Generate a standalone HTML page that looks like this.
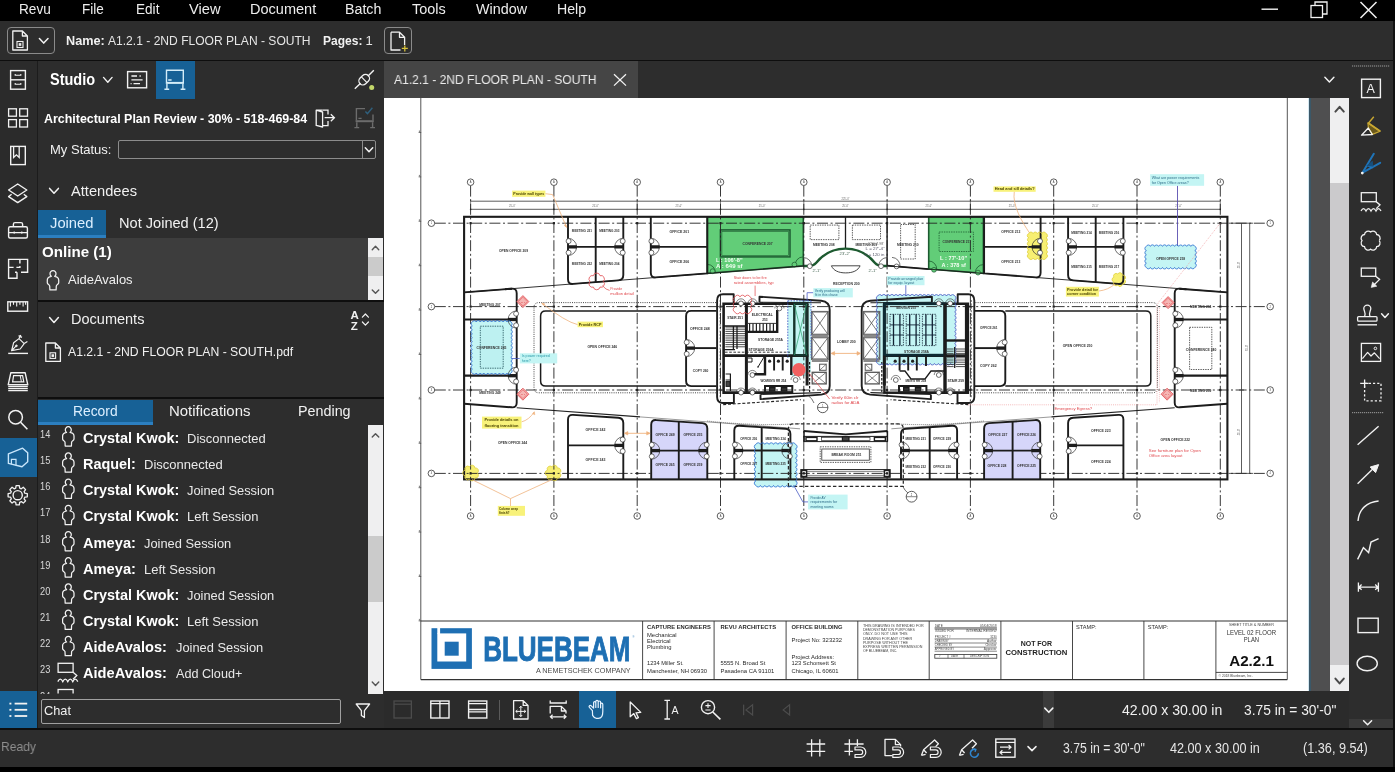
<!DOCTYPE html>
<html lang="en"><head><meta charset="utf-8"><title>Bluebeam Revu - A1.2.1 - 2ND FLOOR PLAN - SOUTH</title>
<style>
html,body{margin:0;padding:0;background:#000;}
body{width:1395px;height:772px;position:relative;overflow:hidden;font-family:"Liberation Sans",sans-serif;color:#f1f1f1;}
#app{position:absolute;left:0;top:0;width:1395px;height:772px;will-change:transform;}
.b{position:absolute;}
.t{position:absolute;white-space:pre;line-height:1;transform-origin:0 0;}
svg{position:absolute;left:0;top:0;overflow:hidden;}
svg text{font-family:"Liberation Sans",sans-serif;}
</style></head>
<body>
<div id="app">
<div class="b menubar" style="left:0px;top:0px;width:1395px;height:21px;background:#000;"></div>
<span class="t" id="t1" style="left:18.6px;top:2.00px;font-size:14px;color:#ededed;transform:scaleX(0.9759);">Revu</span>
<span class="t" id="t2" style="left:81.7px;top:2.00px;font-size:14px;color:#ededed;transform:scaleX(0.9662);">File</span>
<span class="t" id="t3" style="left:135.5px;top:2.00px;font-size:14px;color:#ededed;transform:scaleX(0.9699);">Edit</span>
<span class="t" id="t4" style="left:189.2px;top:2.00px;font-size:14px;color:#ededed;transform:scaleX(1.0467);">View</span>
<span class="t" id="t5" style="left:249.8px;top:2.00px;font-size:14px;color:#ededed;transform:scaleX(1.0374);">Document</span>
<span class="t" id="t6" style="left:344.9px;top:2.00px;font-size:14px;color:#ededed;transform:scaleX(1.0164);">Batch</span>
<span class="t" id="t7" style="left:412.2px;top:2.00px;font-size:14px;color:#ededed;transform:scaleX(1.0310);">Tools</span>
<span class="t" id="t8" style="left:475.7px;top:2.00px;font-size:14px;color:#ededed;transform:scaleX(1.0242);">Window</span>
<span class="t" id="t9" style="left:557px;top:2.00px;font-size:14px;color:#ededed;transform:scaleX(1.0105);">Help</span>
<div class="b toolbar" style="left:0px;top:21px;width:1395px;height:39px;background:#2d2d2d;"></div>
<div class="b" style="left:0px;top:59.6px;width:1395px;height:1.6px;background:#0e0e0e;"></div>
<div class="b" style="left:7px;top:27px;width:47.5px;height:27px;border:1px solid #8a8a8a;border-radius:4px;box-sizing:border-box;"></div>
<div class="b" style="left:383.7px;top:27px;width:28.1px;height:27px;border:1px solid #8a8a8a;border-radius:4px;box-sizing:border-box;"></div>
<span class="t" id="t10" style="left:66px;top:34.05px;font-size:13px;font-weight:700;transform:scaleX(0.9736);">Name:</span>
<span class="t" id="t11" style="left:107.8px;top:34.05px;font-size:13px;color:#e6e6e6;transform:scaleX(0.9286);">A1.2.1 - 2ND FLOOR PLAN - SOUTH</span>
<span class="t" id="t12" style="left:322.8px;top:34.05px;font-size:13px;font-weight:700;transform:scaleX(0.9240);">Pages:</span>
<span class="t" id="t13" style="left:365.6px;top:34.05px;font-size:13px;color:#e6e6e6;">1</span>
<div class="b strip" style="left:0px;top:61.2px;width:36.6px;height:667.8px;background:#2b2b2b;"></div>
<div class="b" style="left:36.6px;top:61.2px;width:1.4px;height:667.8px;background:#1c1c1c;"></div>
<div class="b" style="left:0px;top:438px;width:36.6px;height:38.8px;background:#176196;"></div>
<div class="b panel" style="left:38px;top:61.2px;width:345.8px;height:667.8px;background:#2d2d2d;"></div>
<div class="b" style="left:155.5px;top:61.2px;width:39px;height:37.8px;background:#176196;"></div>
<span class="t" id="t14" style="left:50.2px;top:72.01px;font-size:16px;font-weight:700;color:#fff;transform:scaleX(0.9062);">Studio</span>
<span class="t" id="t15" style="left:43.8px;top:112.02px;font-size:13.5px;font-weight:700;color:#fff;transform:scaleX(0.9206);">Architectural Plan Review - 30% - 518-469-84</span>
<span class="t" id="t16" style="left:49.5px;top:143.05px;font-size:13px;transform:scaleX(1.0013);">My Status:</span>
<div class="b" style="left:117.8px;top:140px;width:258.6px;height:19.3px;border:1px solid #8c8c8c;border-radius:2px;box-sizing:border-box;"></div>
<div class="b" style="left:361.5px;top:140.5px;width:1px;height:18.3px;background:#8c8c8c;"></div>
<span class="t" id="t17" style="left:71.4px;top:184.02px;font-size:14.8px;transform:scaleX(0.9904);">Attendees</span>
<div class="b" style="left:38px;top:209.8px;width:68px;height:28px;background:#176196;"></div>
<div class="b" style="left:38px;top:235.4px;width:68px;height:2.4px;background:#2c7fc0;"></div>
<span class="t" id="t18" style="left:49.8px;top:216.02px;font-size:14.8px;color:#dcefff;transform:scaleX(0.9975);">Joined</span>
<span class="t" id="t19" style="left:118.5px;top:216.02px;font-size:14.8px;transform:scaleX(0.9855);">Not Joined (12)</span>
<div class="b" style="left:38px;top:237.8px;width:329.7px;height:61.9px;background:#3d3d3d;"></div>
<div class="b" style="left:367.7px;top:237.8px;width:15.7px;height:61.9px;background:#efeff0;"></div>
<div class="b" style="left:367.7px;top:257px;width:15.7px;height:18.5px;background:#cbcbcb;"></div>
<span class="t" id="t20" style="left:42px;top:245.02px;font-size:14.8px;font-weight:700;color:#fff;transform:scaleX(1.0229);">Online (1)</span>
<span class="t" id="t21" style="left:68.4px;top:273.02px;font-size:13.5px;transform:scaleX(0.9599);">AideAvalos</span>
<div class="b" style="left:38px;top:299.8px;width:345.8px;height:1.9px;background:#0e0e0e;"></div>
<span class="t" id="t22" style="left:71.4px;top:312.02px;font-size:14.8px;transform:scaleX(0.9807);">Documents</span>
<span class="t" id="t23" style="left:68.4px;top:345.05px;font-size:13px;transform:scaleX(0.9389);">A1.2.1 - 2ND FLOOR PLAN - SOUTH.pdf</span>
<div class="b" style="left:38px;top:396.7px;width:345.8px;height:2.6px;background:#0e0e0e;"></div>
<div class="b" style="left:38px;top:399.6px;width:114.6px;height:25.1px;background:#176196;"></div>
<div class="b" style="left:38px;top:422.3px;width:114.6px;height:2.4px;background:#2c7fc0;"></div>
<span class="t" id="t24" style="left:72.6px;top:404.02px;font-size:14.8px;color:#dcefff;transform:scaleX(0.9349);">Record</span>
<span class="t" id="t25" style="left:168.6px;top:404.02px;font-size:14.8px;transform:scaleX(1.0110);">Notifications</span>
<span class="t" id="t26" style="left:297.9px;top:404.02px;font-size:14.8px;transform:scaleX(0.9685);">Pending</span>
<div class="b log" style="left:38px;top:425px;width:329.7px;height:268.6px;background:#2d2d2d;overflow:hidden;"><span class="t" id="t27" style="left:2.3px;top:4.98px;font-size:10px;color:#d8d8d8;transform:scaleX(0.9258);">14</span>
<span class="t" id="t28" style="left:44.9px;top:5.03px;font-size:15.5px;font-weight:700;color:#fff;transform:scaleX(0.9316);">Crystal Kwok:</span>
<span class="t" id="t29" style="left:149.4px;top:7.05px;font-size:13px;color:#e9e9e9;transform:scaleX(0.9990);">Disconnected</span>
<span class="t" id="t30" style="left:2.3px;top:30.99px;font-size:10px;color:#d8d8d8;transform:scaleX(0.9258);">15</span>
<span class="t" id="t31" style="left:44.9px;top:31.03px;font-size:15.5px;font-weight:700;color:#fff;transform:scaleX(0.9306);">Raquel:</span>
<span class="t" id="t32" style="left:106.3px;top:33.05px;font-size:13px;color:#e9e9e9;transform:scaleX(0.9990);">Disconnected</span>
<span class="t" id="t33" style="left:2.3px;top:56.98px;font-size:10px;color:#d8d8d8;transform:scaleX(0.9258);">16</span>
<span class="t" id="t34" style="left:44.9px;top:57.03px;font-size:15.5px;font-weight:700;color:#fff;transform:scaleX(0.9316);">Crystal Kwok:</span>
<span class="t" id="t35" style="left:149.4px;top:59.05px;font-size:13px;color:#e9e9e9;transform:scaleX(0.9890);">Joined Session</span>
<span class="t" id="t36" style="left:2.3px;top:82.98px;font-size:10px;color:#d8d8d8;transform:scaleX(0.9258);">17</span>
<span class="t" id="t37" style="left:44.9px;top:83.03px;font-size:15.5px;font-weight:700;color:#fff;transform:scaleX(0.9316);">Crystal Kwok:</span>
<span class="t" id="t38" style="left:149.4px;top:85.05px;font-size:13px;color:#e9e9e9;transform:scaleX(0.9993);">Left Session</span>
<span class="t" id="t39" style="left:2.3px;top:109.98px;font-size:10px;color:#d8d8d8;transform:scaleX(0.9258);">18</span>
<span class="t" id="t40" style="left:44.9px;top:110.03px;font-size:15.5px;font-weight:700;color:#fff;transform:scaleX(0.9446);">Ameya:</span>
<span class="t" id="t41" style="left:106.3px;top:112.05px;font-size:13px;color:#e9e9e9;transform:scaleX(0.9890);">Joined Session</span>
<span class="t" id="t42" style="left:2.3px;top:135.98px;font-size:10px;color:#d8d8d8;transform:scaleX(0.9258);">19</span>
<span class="t" id="t43" style="left:44.9px;top:136.03px;font-size:15.5px;font-weight:700;color:#fff;transform:scaleX(0.9446);">Ameya:</span>
<span class="t" id="t44" style="left:106.3px;top:138.05px;font-size:13px;color:#e9e9e9;transform:scaleX(0.9993);">Left Session</span>
<span class="t" id="t45" style="left:2.3px;top:161.98px;font-size:10px;color:#d8d8d8;transform:scaleX(0.9258);">20</span>
<span class="t" id="t46" style="left:44.9px;top:162.03px;font-size:15.5px;font-weight:700;color:#fff;transform:scaleX(0.9316);">Crystal Kwok:</span>
<span class="t" id="t47" style="left:149.4px;top:164.05px;font-size:13px;color:#e9e9e9;transform:scaleX(0.9890);">Joined Session</span>
<span class="t" id="t48" style="left:2.3px;top:187.98px;font-size:10px;color:#d8d8d8;transform:scaleX(0.9258);">21</span>
<span class="t" id="t49" style="left:44.9px;top:188.03px;font-size:15.5px;font-weight:700;color:#fff;transform:scaleX(0.9316);">Crystal Kwok:</span>
<span class="t" id="t50" style="left:149.4px;top:190.05px;font-size:13px;color:#e9e9e9;transform:scaleX(0.9993);">Left Session</span>
<span class="t" id="t51" style="left:2.3px;top:213.98px;font-size:10px;color:#d8d8d8;transform:scaleX(0.9258);">22</span>
<span class="t" id="t52" style="left:44.9px;top:214.03px;font-size:15.5px;font-weight:700;color:#fff;transform:scaleX(0.9425);">AideAvalos:</span>
<span class="t" id="t53" style="left:137.8px;top:216.05px;font-size:13px;color:#e9e9e9;transform:scaleX(0.9890);">Joined Session</span>
<span class="t" id="t54" style="left:2.3px;top:239.98px;font-size:10px;color:#d8d8d8;transform:scaleX(0.9258);">23</span>
<span class="t" id="t55" style="left:44.9px;top:240.03px;font-size:15.5px;font-weight:700;color:#fff;transform:scaleX(0.9425);">AideAvalos:</span>
<span class="t" id="t56" style="left:137.8px;top:242.05px;font-size:13px;color:#e9e9e9;transform:scaleX(0.9705);">Add Cloud+</span>
<span class="t" id="t57" style="left:2.3px;top:266.99px;font-size:10px;color:#d8d8d8;transform:scaleX(0.9258);">24</span>
<span class="t" id="t58" style="left:44.9px;top:267.03px;font-size:15.5px;font-weight:700;color:#fff;transform:scaleX(0.9425);">AideAvalos:</span>
<span class="t" id="t59" style="left:137.8px;top:269.05px;font-size:13px;color:#e9e9e9;transform:scaleX(0.9705);">Add Cloud+</span>
</div>
<div class="b" style="left:367.7px;top:424.7px;width:15.7px;height:268.9px;background:#efeff0;"></div>
<div class="b" style="left:367.7px;top:535.6px;width:15.7px;height:66.4px;background:#cbcbcb;"></div>
<div class="b" style="left:0px;top:691px;width:36.8px;height:37.7px;background:#176196;"></div>
<div class="b" style="left:41.2px;top:698.6px;width:299.8px;height:25.4px;border:1.3px solid #a0a0a0;border-radius:2px;box-sizing:border-box;"></div>
<span class="t" id="t60" style="left:43.6px;top:704.02px;font-size:13.5px;transform:scaleX(0.9463);">Chat</span>
<div class="b tabbar" style="left:383.8px;top:61.2px;width:965.2px;height:36.8px;background:#2d2d2d;"></div>
<div class="b tab" style="left:383.8px;top:61.2px;width:253.9px;height:36.8px;background:#454545;"></div>
<span class="t" id="t61" style="left:393.7px;top:73.05px;font-size:13px;color:#ececec;transform:scaleX(0.9282);">A1.2.1 - 2ND FLOOR PLAN - SOUTH</span>
<div class="b docview" style="left:383.8px;top:98px;width:965.2px;height:592.6px;background:#fff;"></div>
<div class="b" style="left:1309.4px;top:98px;width:20.2px;height:592.6px;background:#4f4f50;"></div>
<div class="b" style="left:1308.2px;top:98px;width:1.2px;height:592.6px;background:#d4e8f2;"></div>
<div class="b" style="left:1309.2px;top:98px;width:1.6px;height:592.6px;background:#3b5868;"></div>
<div class="b" style="left:1329.6px;top:98px;width:19.4px;height:592.6px;background:#efeff0;"></div>
<div class="b" style="left:1329.6px;top:183.4px;width:19.4px;height:481.4px;background:#cbcacc;"></div>
<div class="b righttools" style="left:1349px;top:61.2px;width:44.4px;height:667.8px;background:#2d2d2d;"></div>
<div class="b" style="left:1393.4px;top:21px;width:1.6px;height:746px;background:#111;"></div>
<div class="b" style="left:1349px;top:719px;width:44.4px;height:9.6px;background:#3a3a3a;"></div>
<div class="b navbar" style="left:383.8px;top:690.6px;width:965.2px;height:37.4px;background:#2b2b2b;"></div>
<div class="b" style="left:578.7px;top:690.6px;width:37.7px;height:37.4px;background:#176196;"></div>
<div class="b" style="left:1043.4px;top:690.6px;width:10.7px;height:37.4px;background:#3b3b3b;"></div>
<div class="b" style="left:499px;top:700px;width:1.2px;height:19.6px;background:#5a5a5a;"></div>
<span class="t" id="t62" style="left:1121.9px;top:703.02px;font-size:14.8px;transform:scaleX(0.9524);">42.00 x 30.00 in</span>
<span class="t" id="t63" style="left:1244.1px;top:703.02px;font-size:14.8px;transform:scaleX(0.9325);">3.75 in = 30'-0"</span>
<div class="b" style="left:0px;top:728px;width:1395px;height:1.6px;background:#0e0e0e;"></div>
<div class="b statusbar" style="left:0px;top:729.6px;width:1393.4px;height:37px;background:#2d2d2d;"></div>
<span class="t" id="t64" style="left:0.5px;top:740.02px;font-size:13.5px;color:#8f8f8f;transform:scaleX(0.8967);">Ready</span>
<span class="t" id="t65" style="left:1062.9px;top:741.00px;font-size:14px;color:#e6e6e6;transform:scaleX(0.8745);">3.75 in = 30'-0"</span>
<span class="t" id="t66" style="left:1170.3px;top:741.00px;font-size:14px;color:#e6e6e6;transform:scaleX(0.9012);">42.00 x 30.00 in</span>
<span class="t" id="t67" style="left:1303.4px;top:741.00px;font-size:14px;color:#e6e6e6;transform:scaleX(0.9049);">(1.36, 9.54)</span>
<div class="b" style="left:0px;top:766.6px;width:1395px;height:5.4px;background:#000;"></div>
<svg width="1395" height="772" viewBox="0 0 1395 772" class="plan">
<clipPath id="docclip"><rect x="383.6" y="98" width="925.6" height="592.6"/></clipPath>
<g clip-path="url(#docclip)">
<path d="M420.8 98 V679.6 M1287.3 98 V679.6" stroke="#555" stroke-width="1" fill="none" />
<path d="M420.8 621 H1287.3 M420.8 679.6 H1287.3" stroke="#333" stroke-width="1.2" fill="none" />
<path d="M642.6 621 V679.6" stroke="#333" stroke-width="0.9" fill="none" />
<path d="M714.1 621 V679.6" stroke="#333" stroke-width="0.9" fill="none" />
<path d="M786.1 621 V679.6" stroke="#333" stroke-width="0.9" fill="none" />
<path d="M857.8 621 V679.6" stroke="#333" stroke-width="0.9" fill="none" />
<path d="M929.2 621 V679.6" stroke="#333" stroke-width="0.9" fill="none" />
<path d="M1000.9 621 V679.6" stroke="#333" stroke-width="0.9" fill="none" />
<path d="M1072.5 621 V679.6" stroke="#333" stroke-width="0.9" fill="none" />
<path d="M1143.9 621 V679.6" stroke="#333" stroke-width="0.9" fill="none" />
<path d="M1215.9 621 V679.6" stroke="#333" stroke-width="0.9" fill="none" />
<path d="M418.6 132.5 h2.6 M419.4 130.5 v1.6" stroke="#444" stroke-width="0.7" fill="none" />
<path d="M418.6 176.9 h2.6 M419.4 174.9 v1.6" stroke="#444" stroke-width="0.7" fill="none" />
<path d="M418.6 221.3 h2.6 M419.4 219.3 v1.6" stroke="#444" stroke-width="0.7" fill="none" />
<path d="M418.6 265.7 h2.6 M419.4 263.7 v1.6" stroke="#444" stroke-width="0.7" fill="none" />
<path d="M418.6 310.1 h2.6 M419.4 308.1 v1.6" stroke="#444" stroke-width="0.7" fill="none" />
<path d="M418.6 354.5 h2.6 M419.4 352.5 v1.6" stroke="#444" stroke-width="0.7" fill="none" />
<path d="M418.6 398.9 h2.6 M419.4 396.9 v1.6" stroke="#444" stroke-width="0.7" fill="none" />
<path d="M418.6 443.3 h2.6 M419.4 441.3 v1.6" stroke="#444" stroke-width="0.7" fill="none" />
<path d="M418.6 487.7 h2.6 M419.4 485.7 v1.6" stroke="#444" stroke-width="0.7" fill="none" />
<path d="M418.6 532.1 h2.6 M419.4 530.1 v1.6" stroke="#444" stroke-width="0.7" fill="none" />
<path d="M418.6 576.5 h2.6 M419.4 574.5 v1.6" stroke="#444" stroke-width="0.7" fill="none" />
<path d="M418.6 620.9 h2.6 M419.4 618.9 v1.6" stroke="#444" stroke-width="0.7" fill="none" />
<rect x="431.5" y="628.2" width="40.4" height="40.7" rx="0" stroke="none" stroke-width="0" fill="#1e6fb3" />
<rect x="437.3" y="633.4" width="28.9" height="28.1" rx="0" stroke="none" stroke-width="0" fill="#fff" />
<rect x="437.3" y="628" width="2.8" height="6" rx="0" stroke="none" stroke-width="0" fill="#fff" />
<rect x="444.7" y="641.7" width="14" height="14" rx="0" stroke="none" stroke-width="0" fill="#1e6fb3" />
<text x="483.2" y="660.7" font-size="34.2" fill="#1e6fb3" textLength="147.3" lengthAdjust="spacingAndGlyphs" font-weight="700" stroke="#1e6fb3" stroke-width="0.9">BLUEBEAM</text>
<text x="632.6" y="638.4" font-size="2.6" fill="#1e6fb3" >®</text>
<text x="535.9" y="672.7" font-size="6.4" fill="#4a4a4a" textLength="94.8" lengthAdjust="spacingAndGlyphs" >A NEMETSCHEK COMPANY</text>
<text x="647" y="628.7" font-size="5.9" fill="#2a2a2a" textLength="63.8" lengthAdjust="spacingAndGlyphs" font-weight="700" >CAPTURE ENGINEERS</text>
<text x="647" y="636.6" font-size="5.6" fill="#2a2a2a" textLength="29.6" lengthAdjust="spacingAndGlyphs" >Mechanical</text>
<text x="647" y="643" font-size="5.6" fill="#2a2a2a" textLength="23.6" lengthAdjust="spacingAndGlyphs" >Electrical</text>
<text x="647" y="649.2" font-size="5.6" fill="#2a2a2a" textLength="24.4" lengthAdjust="spacingAndGlyphs" >Plumbing</text>
<text x="647" y="665.4" font-size="5.6" fill="#2a2a2a" textLength="36.6" lengthAdjust="spacingAndGlyphs" >1234 Miller St.</text>
<text x="647" y="672.5" font-size="5.6" fill="#2a2a2a" textLength="59.9" lengthAdjust="spacingAndGlyphs" >Manchester, NH 06930</text>
<text x="720.5" y="628.7" font-size="5.9" fill="#2a2a2a" textLength="55.6" lengthAdjust="spacingAndGlyphs" font-weight="700" >REVU ARCHITECTS</text>
<text x="720.5" y="665.4" font-size="5.6" fill="#2a2a2a" textLength="44.8" lengthAdjust="spacingAndGlyphs" >5555 N. Broad St</text>
<text x="720.5" y="672.5" font-size="5.6" fill="#2a2a2a" textLength="53.8" lengthAdjust="spacingAndGlyphs" >Pasadena CA 91101</text>
<text x="791.5" y="628.7" font-size="5.9" fill="#2a2a2a" textLength="50.9" lengthAdjust="spacingAndGlyphs" font-weight="700" >OFFICE BUILDING</text>
<text x="791.5" y="642" font-size="5.6" fill="#2a2a2a" textLength="50.5" lengthAdjust="spacingAndGlyphs" >Project No: 323232</text>
<text x="791.5" y="658.8" font-size="5.6" fill="#2a2a2a" textLength="42.6" lengthAdjust="spacingAndGlyphs" >Project Address:</text>
<text x="791.5" y="665.4" font-size="5.6" fill="#2a2a2a" textLength="44.4" lengthAdjust="spacingAndGlyphs" >123 Schonsett St</text>
<text x="791.5" y="672.5" font-size="5.6" fill="#2a2a2a" textLength="47" lengthAdjust="spacingAndGlyphs" >Chicago, IL 60601</text>
<text x="862.9" y="626.6" font-size="3.3" fill="#444" textLength="60.9" lengthAdjust="spacingAndGlyphs" >THIS DRAWING IS INTENDED FOR</text>
<text x="862.9" y="630.9" font-size="3.3" fill="#444" textLength="52" lengthAdjust="spacingAndGlyphs" >DEMONSTRATION PURPOSES</text>
<text x="862.9" y="635.2" font-size="3.3" fill="#444" textLength="44.6" lengthAdjust="spacingAndGlyphs" >ONLY.  DO NOT USE THIS</text>
<text x="862.9" y="639.5" font-size="3.3" fill="#444" textLength="49.4" lengthAdjust="spacingAndGlyphs" >DRAWING FOR ANY OTHER</text>
<text x="862.9" y="643.8" font-size="3.3" fill="#444" textLength="45" lengthAdjust="spacingAndGlyphs" >PURPOSE WITHOUT THE</text>
<text x="862.9" y="648.1" font-size="3.3" fill="#444" textLength="59.4" lengthAdjust="spacingAndGlyphs" >EXPRESS WRITTEN PERMISSION</text>
<text x="862.9" y="652.4" font-size="3.3" fill="#444" textLength="34.4" lengthAdjust="spacingAndGlyphs" >OF BLUEBEAM, INC.</text>
<text x="934.8" y="626.8" font-size="2.8" fill="#444" textLength="8" lengthAdjust="spacingAndGlyphs" >DATE</text>
<text x="980" y="626.8" font-size="2.8" fill="#444" textLength="16.6" lengthAdjust="spacingAndGlyphs" >05/04/2018</text>
<path d="M934.6 627.8 H996.9 M934.6 629 H996.9" stroke="#333" stroke-width="0.7" fill="none" />
<text x="934.8" y="632.4" font-size="2.8" fill="#444" textLength="19" lengthAdjust="spacingAndGlyphs" >ISSUED FOR</text>
<text x="966" y="632.4" font-size="2.8" fill="#444" textLength="30.6" lengthAdjust="spacingAndGlyphs" >INTERNAL REVIEW</text>
<text x="934.8" y="638" font-size="2.8" fill="#444" textLength="15.75" lengthAdjust="spacingAndGlyphs" >PROJECT #</text>
<text x="996.6" y="638" font-size="2.8" fill="#444" textLength="6.4" lengthAdjust="spacingAndGlyphs" text-anchor="end" >3230</text>
<path d="M934.6 638.9 H996.9" stroke="#333" stroke-width="0.6" fill="none" />
<text x="934.8" y="642.1" font-size="2.8" fill="#444" textLength="14" lengthAdjust="spacingAndGlyphs" >DRAWN BY</text>
<text x="996.6" y="642.1" font-size="2.8" fill="#444" textLength="9.6" lengthAdjust="spacingAndGlyphs" text-anchor="end" >Author</text>
<path d="M934.6 643.0 H996.9" stroke="#333" stroke-width="0.6" fill="none" />
<text x="934.8" y="646.2" font-size="2.8" fill="#444" textLength="17.5" lengthAdjust="spacingAndGlyphs" >CHECKED BY</text>
<text x="996.6" y="646.2" font-size="2.8" fill="#444" textLength="11.2" lengthAdjust="spacingAndGlyphs" text-anchor="end" >Checker</text>
<path d="M934.6 647.1 H996.9" stroke="#333" stroke-width="0.6" fill="none" />
<text x="934.8" y="650.3" font-size="2.8" fill="#444" textLength="19.25" lengthAdjust="spacingAndGlyphs" >APPROVED BY</text>
<text x="996.6" y="650.3" font-size="2.8" fill="#444" textLength="12.8" lengthAdjust="spacingAndGlyphs" text-anchor="end" >Approver</text>
<path d="M934.6 651.2 H996.9" stroke="#333" stroke-width="0.6" fill="none" />
<rect x="934.8" y="654.4" width="62" height="3.8" rx="0" stroke="#333" stroke-width="0.8" fill="none" />
<path d="M948 654.4 V658.2 M964 654.4 V658.2" stroke="#333" stroke-width="0.6" fill="none" />
<text x="939" y="657.4" font-size="2.6" fill="#444" >#</text>
<text x="951" y="657.4" font-size="2.6" fill="#444" textLength="7" lengthAdjust="spacingAndGlyphs" >DATE</text>
<text x="970" y="657.4" font-size="2.6" fill="#444" textLength="19" lengthAdjust="spacingAndGlyphs" >DESCRIPTION</text>
<text x="1036.4" y="646.3" font-size="7.7" fill="#222" textLength="31.4" lengthAdjust="spacingAndGlyphs" font-weight="700" text-anchor="middle" >NOT FOR</text>
<text x="1036.4" y="655.3" font-size="7.7" fill="#222" textLength="62" lengthAdjust="spacingAndGlyphs" font-weight="700" text-anchor="middle" >CONSTRUCTION</text>
<text x="1076.1" y="628.7" font-size="5.7" fill="#2a2a2a" textLength="20.5" lengthAdjust="spacingAndGlyphs" >STAMP:</text>
<text x="1147.8" y="628.7" font-size="5.7" fill="#2a2a2a" textLength="20.5" lengthAdjust="spacingAndGlyphs" >STAMP:</text>
<text x="1251.4" y="626.4" font-size="3.1" fill="#444" textLength="45" lengthAdjust="spacingAndGlyphs" text-anchor="middle" >SHEET TITLE &amp; NUMBER</text>
<text x="1251.4" y="634.8" font-size="6.6" fill="#333" textLength="49.4" lengthAdjust="spacingAndGlyphs" text-anchor="middle" >LEVEL 02 FLOOR</text>
<text x="1251.4" y="641.5" font-size="6.6" fill="#333" textLength="15.4" lengthAdjust="spacingAndGlyphs" text-anchor="middle" >PLAN</text>
<text x="1229.2" y="666" font-size="15.2" fill="#111" textLength="44.8" lengthAdjust="spacingAndGlyphs" font-weight="700" >A2.2.1</text>
<path d="M1215.9 672.4 H1287.3" stroke="#333" stroke-width="0.9" fill="none" />
<text x="1218.6" y="677.2" font-size="3" fill="#444" textLength="34" lengthAdjust="spacingAndGlyphs" >© 2018 Bluebeam, Inc.</text>
<path d="M1028.8 233.6 A2.26 2.26 0 0 1 1033.1 233.6 A2.26 2.26 0 0 1 1037.4 233.6 A2.26 2.26 0 0 1 1041.7 233.6 A2.26 2.26 0 0 1 1046.0 233.6 A2.14 2.14 0 0 1 1046.0 237.7 A2.14 2.14 0 0 1 1046.0 241.7 A2.14 2.14 0 0 1 1046.0 245.8 A2.14 2.14 0 0 1 1046.0 249.9 A2.14 2.14 0 0 1 1046.0 253.9 A2.14 2.14 0 0 1 1046.0 258.0 A2.26 2.26 0 0 1 1041.7 258.0 A2.26 2.26 0 0 1 1037.4 258.0 A2.26 2.26 0 0 1 1033.1 258.0 A2.26 2.26 0 0 1 1028.8 258.0 A2.14 2.14 0 0 1 1028.8 253.9 A2.14 2.14 0 0 1 1028.8 249.9 A2.14 2.14 0 0 1 1028.8 245.8 A2.14 2.14 0 0 1 1028.8 241.7 A2.14 2.14 0 0 1 1028.8 237.7 A2.14 2.14 0 0 1 1028.8 233.6 Z" stroke="none" stroke-width="0" fill="#f7ef72" />
<path d="M1124.5 279.6 A2.48 2.48 0 0 1 1122.4 284.0 A2.48 2.48 0 0 1 1117.7 285.1 A2.48 2.48 0 0 1 1113.9 282.0 A2.48 2.48 0 0 1 1113.9 277.2 A2.48 2.48 0 0 1 1117.7 274.1 A2.48 2.48 0 0 1 1122.4 275.2 A2.48 2.48 0 0 1 1124.5 279.6 Z" stroke="none" stroke-width="0" fill="#f7ef72" />
<path d="M477.3 473.0 A2.83 2.83 0 0 1 474.9 478.0 A2.83 2.83 0 0 1 469.5 479.2 A2.83 2.83 0 0 1 465.1 475.8 A2.83 2.83 0 0 1 465.1 470.2 A2.83 2.83 0 0 1 469.5 466.8 A2.83 2.83 0 0 1 474.9 468.0 A2.83 2.83 0 0 1 477.3 473.0 Z" stroke="none" stroke-width="0" fill="#f7ef72" />
<path d="M559.7 473.0 A2.83 2.83 0 0 1 557.3 478.0 A2.83 2.83 0 0 1 551.9 479.2 A2.83 2.83 0 0 1 547.5 475.8 A2.83 2.83 0 0 1 547.5 470.2 A2.83 2.83 0 0 1 551.9 466.8 A2.83 2.83 0 0 1 557.3 468.0 A2.83 2.83 0 0 1 559.7 473.0 Z" stroke="none" stroke-width="0" fill="#f7ef72" />
<path d="M1146.4 246.4 A2.12 2.12 0 0 1 1150.4 246.4 A2.12 2.12 0 0 1 1154.5 246.4 A2.12 2.12 0 0 1 1158.5 246.4 A2.12 2.12 0 0 1 1162.5 246.4 A2.12 2.12 0 0 1 1166.6 246.4 A2.12 2.12 0 0 1 1170.6 246.4 A2.12 2.12 0 0 1 1174.6 246.4 A2.12 2.12 0 0 1 1178.7 246.4 A2.12 2.12 0 0 1 1182.7 246.4 A2.12 2.12 0 0 1 1186.7 246.4 A2.12 2.12 0 0 1 1190.8 246.4 A2.12 2.12 0 0 1 1194.8 246.4 A2.20 2.20 0 0 1 1194.8 250.6 A2.20 2.20 0 0 1 1194.8 254.8 A2.20 2.20 0 0 1 1194.8 259.0 A2.20 2.20 0 0 1 1194.8 263.2 A2.20 2.20 0 0 1 1194.8 267.4 A2.12 2.12 0 0 1 1190.8 267.4 A2.12 2.12 0 0 1 1186.7 267.4 A2.12 2.12 0 0 1 1182.7 267.4 A2.12 2.12 0 0 1 1178.7 267.4 A2.12 2.12 0 0 1 1174.6 267.4 A2.12 2.12 0 0 1 1170.6 267.4 A2.12 2.12 0 0 1 1166.6 267.4 A2.12 2.12 0 0 1 1162.5 267.4 A2.12 2.12 0 0 1 1158.5 267.4 A2.12 2.12 0 0 1 1154.5 267.4 A2.12 2.12 0 0 1 1150.4 267.4 A2.12 2.12 0 0 1 1146.4 267.4 A2.20 2.20 0 0 1 1146.4 263.2 A2.20 2.20 0 0 1 1146.4 259.0 A2.20 2.20 0 0 1 1146.4 254.8 A2.20 2.20 0 0 1 1146.4 250.6 A2.20 2.20 0 0 1 1146.4 246.4 Z" stroke="none" stroke-width="0" fill="#c4f5f4" />
<path d="M472.4 322.0 A2.02 2.02 0 0 1 476.2 322.0 A2.02 2.02 0 0 1 480.1 322.0 A2.02 2.02 0 0 1 483.9 322.0 A2.02 2.02 0 0 1 487.8 322.0 A2.02 2.02 0 0 1 491.6 322.0 A2.02 2.02 0 0 1 495.4 322.0 A2.02 2.02 0 0 1 499.3 322.0 A2.02 2.02 0 0 1 503.1 322.0 A2.02 2.02 0 0 1 507.0 322.0 A2.02 2.02 0 0 1 510.8 322.0 A2.06 2.06 0 0 1 510.8 325.9 A2.06 2.06 0 0 1 510.8 329.8 A2.06 2.06 0 0 1 510.8 333.8 A2.06 2.06 0 0 1 510.8 337.7 A2.06 2.06 0 0 1 510.8 341.6 A2.06 2.06 0 0 1 510.8 345.5 A2.06 2.06 0 0 1 510.8 349.5 A2.06 2.06 0 0 1 510.8 353.4 A2.06 2.06 0 0 1 510.8 357.3 A2.06 2.06 0 0 1 510.8 361.2 A2.06 2.06 0 0 1 510.8 365.2 A2.06 2.06 0 0 1 510.8 369.1 A2.06 2.06 0 0 1 510.8 373.0 A2.02 2.02 0 0 1 507.0 373.0 A2.02 2.02 0 0 1 503.1 373.0 A2.02 2.02 0 0 1 499.3 373.0 A2.02 2.02 0 0 1 495.4 373.0 A2.02 2.02 0 0 1 491.6 373.0 A2.02 2.02 0 0 1 487.8 373.0 A2.02 2.02 0 0 1 483.9 373.0 A2.02 2.02 0 0 1 480.1 373.0 A2.02 2.02 0 0 1 476.2 373.0 A2.02 2.02 0 0 1 472.4 373.0 A2.06 2.06 0 0 1 472.4 369.1 A2.06 2.06 0 0 1 472.4 365.2 A2.06 2.06 0 0 1 472.4 361.2 A2.06 2.06 0 0 1 472.4 357.3 A2.06 2.06 0 0 1 472.4 353.4 A2.06 2.06 0 0 1 472.4 349.5 A2.06 2.06 0 0 1 472.4 345.5 A2.06 2.06 0 0 1 472.4 341.6 A2.06 2.06 0 0 1 472.4 337.7 A2.06 2.06 0 0 1 472.4 333.8 A2.06 2.06 0 0 1 472.4 329.8 A2.06 2.06 0 0 1 472.4 325.9 A2.06 2.06 0 0 1 472.4 322.0 Z" stroke="none" stroke-width="0" fill="#c4f5f4" />
<rect x="480.3" y="326.2" width="22.9" height="42" rx="0" stroke="none" stroke-width="0" fill="#bdf1f1" />
<path d="M756.0 444.4 A2.30 2.30 0 0 1 760.4 444.4 A2.30 2.30 0 0 1 764.8 444.4 A2.30 2.30 0 0 1 769.1 444.4 A2.30 2.30 0 0 1 773.5 444.4 A2.30 2.30 0 0 1 777.9 444.4 A2.30 2.30 0 0 1 782.3 444.4 A2.30 2.30 0 0 1 786.6 444.4 A2.30 2.30 0 0 1 791.0 444.4 A2.30 2.30 0 0 1 795.4 444.4 A2.39 2.39 0 0 1 795.4 449.0 A2.39 2.39 0 0 1 795.4 453.5 A2.39 2.39 0 0 1 795.4 458.1 A2.39 2.39 0 0 1 795.4 462.6 A2.39 2.39 0 0 1 795.4 467.2 A2.39 2.39 0 0 1 795.4 471.7 A2.39 2.39 0 0 1 795.4 476.3 A2.39 2.39 0 0 1 795.4 480.8 A2.39 2.39 0 0 1 795.4 485.4 A2.30 2.30 0 0 1 791.0 485.4 A2.30 2.30 0 0 1 786.6 485.4 A2.30 2.30 0 0 1 782.3 485.4 A2.30 2.30 0 0 1 777.9 485.4 A2.30 2.30 0 0 1 773.5 485.4 A2.30 2.30 0 0 1 769.1 485.4 A2.30 2.30 0 0 1 764.8 485.4 A2.30 2.30 0 0 1 760.4 485.4 A2.30 2.30 0 0 1 756.0 485.4 A2.39 2.39 0 0 1 756.0 480.8 A2.39 2.39 0 0 1 756.0 476.3 A2.39 2.39 0 0 1 756.0 471.7 A2.39 2.39 0 0 1 756.0 467.2 A2.39 2.39 0 0 1 756.0 462.6 A2.39 2.39 0 0 1 756.0 458.1 A2.39 2.39 0 0 1 756.0 453.5 A2.39 2.39 0 0 1 756.0 449.0 A2.39 2.39 0 0 1 756.0 444.4 Z" stroke="none" stroke-width="0" fill="#c4f5f4" />
<rect x="787.8" y="300.8" width="23.2" height="56.9" rx="0" stroke="none" stroke-width="0" fill="#c4f5f4" />
<rect x="808.4" y="357" width="2.6" height="15" rx="0" stroke="none" stroke-width="0" fill="#c4f5f4" />
<rect x="791.3" y="357.7" width="17.1" height="18.3" rx="0" stroke="none" stroke-width="0" fill="#c4f5f4" />
<path d="M877.8 296.0 A2.12 2.12 0 0 1 881.8 296.0 A2.12 2.12 0 0 1 885.9 296.0 A2.12 2.12 0 0 1 889.9 296.0 A2.12 2.12 0 0 1 894.0 296.0 A2.12 2.12 0 0 1 898.0 296.0 A2.12 2.12 0 0 1 902.1 296.0 A2.12 2.12 0 0 1 906.1 296.0 A2.12 2.12 0 0 1 910.1 296.0 A2.12 2.12 0 0 1 914.2 296.0 A2.12 2.12 0 0 1 918.2 296.0 A2.12 2.12 0 0 1 922.3 296.0 A2.12 2.12 0 0 1 926.3 296.0 A2.12 2.12 0 0 1 930.3 296.0 A2.12 2.12 0 0 1 934.4 296.0 A2.12 2.12 0 0 1 938.4 296.0 A2.12 2.12 0 0 1 942.5 296.0 A2.12 2.12 0 0 1 946.5 296.0 A2.12 2.12 0 0 1 950.6 296.0 A2.12 2.12 0 0 1 954.6 296.0 A2.08 2.08 0 0 1 954.6 300.0 A2.08 2.08 0 0 1 954.6 303.9 A2.08 2.08 0 0 1 954.6 307.9 A2.08 2.08 0 0 1 954.6 311.9 A2.08 2.08 0 0 1 954.6 315.8 A2.08 2.08 0 0 1 954.6 319.8 A2.08 2.08 0 0 1 954.6 323.8 A2.08 2.08 0 0 1 954.6 327.7 A2.08 2.08 0 0 1 954.6 331.7 A2.08 2.08 0 0 1 954.6 335.6 A2.08 2.08 0 0 1 954.6 339.6 A2.08 2.08 0 0 1 954.6 343.6 A2.08 2.08 0 0 1 954.6 347.5 A2.08 2.08 0 0 1 954.6 351.5 A2.08 2.08 0 0 1 954.6 355.5 A2.08 2.08 0 0 1 954.6 359.4 A2.08 2.08 0 0 1 954.6 363.4 A2.12 2.12 0 0 1 950.6 363.4 A2.12 2.12 0 0 1 946.5 363.4 A2.12 2.12 0 0 1 942.5 363.4 A2.12 2.12 0 0 1 938.4 363.4 A2.12 2.12 0 0 1 934.4 363.4 A2.12 2.12 0 0 1 930.3 363.4 A2.12 2.12 0 0 1 926.3 363.4 A2.12 2.12 0 0 1 922.3 363.4 A2.12 2.12 0 0 1 918.2 363.4 A2.12 2.12 0 0 1 914.2 363.4 A2.12 2.12 0 0 1 910.1 363.4 A2.12 2.12 0 0 1 906.1 363.4 A2.12 2.12 0 0 1 902.1 363.4 A2.12 2.12 0 0 1 898.0 363.4 A2.12 2.12 0 0 1 894.0 363.4 A2.12 2.12 0 0 1 889.9 363.4 A2.12 2.12 0 0 1 885.9 363.4 A2.12 2.12 0 0 1 881.8 363.4 A2.12 2.12 0 0 1 877.8 363.4 A2.08 2.08 0 0 1 877.8 359.4 A2.08 2.08 0 0 1 877.8 355.5 A2.08 2.08 0 0 1 877.8 351.5 A2.08 2.08 0 0 1 877.8 347.5 A2.08 2.08 0 0 1 877.8 343.6 A2.08 2.08 0 0 1 877.8 339.6 A2.08 2.08 0 0 1 877.8 335.6 A2.08 2.08 0 0 1 877.8 331.7 A2.08 2.08 0 0 1 877.8 327.7 A2.08 2.08 0 0 1 877.8 323.8 A2.08 2.08 0 0 1 877.8 319.8 A2.08 2.08 0 0 1 877.8 315.8 A2.08 2.08 0 0 1 877.8 311.9 A2.08 2.08 0 0 1 877.8 307.9 A2.08 2.08 0 0 1 877.8 303.9 A2.08 2.08 0 0 1 877.8 300.0 A2.08 2.08 0 0 1 877.8 296.0 Z" stroke="none" stroke-width="0" fill="#c4f5f4" />
<path d="M707.3 216.8 H803.3 V265.9 L707.3 273.4 Z" stroke="#1d5a30" stroke-width="1.6" fill="#62cd78" />
<rect x="720.4" y="229.9" width="69.6" height="27" rx="0" stroke="#1d5a30" stroke-width="1.5" fill="none" />
<rect x="721.9" y="231.4" width="66.6" height="24" rx="0" stroke="#1d5a30" stroke-width="0.6" fill="none" />
<path d="M707.3 264.4 A8 8 0 0 1 715.3 272.8" stroke="#1d5a30" stroke-width="0.8" fill="none" />
<circle cx="712.6" cy="271.2" r="2.4" stroke="#1d5a30" stroke-width="0.7" fill="#62cd78" />
<path d="M803.3 256.9 A8 8 0 0 0 795.3 266.6" stroke="#1d5a30" stroke-width="0.8" fill="none" />
<circle cx="794.4" cy="264.6" r="2.4" stroke="#1d5a30" stroke-width="0.7" fill="#62cd78" />
<text x="716" y="261.6" font-size="5.4" fill="#f4fff4" textLength="26.6" lengthAdjust="spacingAndGlyphs" font-weight="700" >L : 106'-8"</text>
<text x="716" y="268.2" font-size="5.4" fill="#f4fff4" textLength="26.6" lengthAdjust="spacingAndGlyphs" font-weight="700" >A : 649 sf</text>
<path d="M845.5 216.8 V249" stroke="#1c1c1c" stroke-width="1.3" fill="none" />
<path d="M887.1 216.8 V265.6" stroke="#1c1c1c" stroke-width="1.4" fill="none" />
<rect x="810.2" y="225.1" width="28.7" height="14.5" rx="0" stroke="#333" stroke-width="0.8" fill="none" stroke-dasharray="1.4 1"/>
<rect x="852.4" y="225.1" width="28.1" height="14.5" rx="0" stroke="#333" stroke-width="0.8" fill="none" stroke-dasharray="1.4 1"/>
<path d="M803.3 266 H808.5 Q813.5 266 816 263 C824 253 833 248.6 845.5 248.6 C858 248.6 867 253 875 263 Q877.5 266 882.5 266 H887.1" stroke="#1d5a30" stroke-width="2.4" fill="none" stroke-linejoin="round"/>
<path d="M803.3 257.6 A8.4 8.4 0 0 1 811.7 266" stroke="#333" stroke-width="0.7" fill="none" />
<circle cx="809.8" cy="266.2" r="2.4" stroke="#333" stroke-width="0.7" fill="#fff" />
<path d="M887.1 257.6 A8.4 8.4 0 0 0 878.7 266" stroke="#333" stroke-width="0.7" fill="none" />
<circle cx="881" cy="266.2" r="2.4" stroke="#333" stroke-width="0.7" fill="#fff" />
<path d="M831.4 265.8 H860.1 C858 270.6 853 272.9 845.7 272.9 C838.5 272.9 833.5 270.6 831.4 265.8 Z" stroke="#333" stroke-width="0.9" fill="#fff" />
<text x="839.6" y="255.4" font-size="4" fill="#4a6a58" textLength="10.6" lengthAdjust="spacingAndGlyphs" >23'-2"</text>
<text x="812.4" y="272" font-size="4" fill="#4a6a58" textLength="8.4" lengthAdjust="spacingAndGlyphs" >2'-1"</text>
<text x="868.4" y="272" font-size="4" fill="#4a6a58" textLength="8.4" lengthAdjust="spacingAndGlyphs" >2'-1"</text>
<text x="868" y="245" font-size="3.6" fill="#666" textLength="16" lengthAdjust="spacingAndGlyphs" >120° 7.98'</text>
<text x="865.6" y="250.4" font-size="4" fill="#556" textLength="19" lengthAdjust="spacingAndGlyphs" >L = 27'-4"</text>
<text x="864.4" y="256.4" font-size="4" fill="#556" textLength="20" lengthAdjust="spacingAndGlyphs" >D = 120 in</text>
<path d="M887.1 265.6 L928.7 269.1" stroke="#1c1c1c" stroke-width="1.7" fill="none" />
<rect x="900.6" y="224.5" width="14.6" height="34.5" rx="0" stroke="#333" stroke-width="0.8" fill="none" stroke-dasharray="1.4 1"/>
<path d="M892 257.4 A8.4 8.4 0 0 1 900 266.6" stroke="#333" stroke-width="0.7" fill="none" />
<circle cx="896.6" cy="266.4" r="2.4" stroke="#333" stroke-width="0.7" fill="#fff" />
<path d="M928.7 216.8 H983.4 V273.4 L928.7 269.1 Z" stroke="#1d5a30" stroke-width="1.6" fill="#62cd78" />
<rect x="939.1" y="232" width="34.3" height="19.5" rx="0" stroke="#1d5a30" stroke-width="0.8" fill="none" stroke-dasharray="1.4 1"/>
<path d="M928.7 261 A8 8 0 0 1 936.7 269.6" stroke="#1d5a30" stroke-width="0.8" fill="none" />
<circle cx="934" cy="269.8" r="2.4" stroke="#1d5a30" stroke-width="0.7" fill="#62cd78" />
<path d="M983.4 264.6 A8 8 0 0 0 975.4 272.6" stroke="#1d5a30" stroke-width="0.8" fill="none" />
<circle cx="978" cy="272.6" r="2.4" stroke="#1d5a30" stroke-width="0.7" fill="#62cd78" />
<text x="940.1" y="260.2" font-size="5.4" fill="#f4fff4" textLength="27" lengthAdjust="spacingAndGlyphs" font-weight="700" >L : 77'-10"</text>
<text x="941.4" y="267" font-size="5.4" fill="#f4fff4" textLength="24.6" lengthAdjust="spacingAndGlyphs" font-weight="700" >A : 378 sf</text>
<path d="M470.6 185.6 V512.6" stroke="#222" stroke-width="0.9" fill="none" stroke-dasharray="11 2.6 2 2.6"/>
<circle cx="470.6" cy="182.2" r="3.3" stroke="#333" stroke-width="0.8" fill="#fff" />
<circle cx="470.6" cy="516" r="3.3" stroke="#333" stroke-width="0.8" fill="#fff" />
<text x="470.6" y="183.3" font-size="2.6" fill="#444" text-anchor="middle" >A</text>
<text x="470.6" y="517.1" font-size="2.6" fill="#444" text-anchor="middle" >A</text>
<path d="M553.9 185.6 V512.6" stroke="#222" stroke-width="0.9" fill="none" stroke-dasharray="11 2.6 2 2.6"/>
<circle cx="553.9" cy="182.2" r="3.3" stroke="#333" stroke-width="0.8" fill="#fff" />
<circle cx="553.9" cy="516" r="3.3" stroke="#333" stroke-width="0.8" fill="#fff" />
<text x="553.9" y="183.3" font-size="2.6" fill="#444" text-anchor="middle" >A</text>
<text x="553.9" y="517.1" font-size="2.6" fill="#444" text-anchor="middle" >A</text>
<path d="M637.2 185.6 V512.6" stroke="#222" stroke-width="0.9" fill="none" stroke-dasharray="11 2.6 2 2.6"/>
<circle cx="637.2" cy="182.2" r="3.3" stroke="#333" stroke-width="0.8" fill="#fff" />
<circle cx="637.2" cy="516" r="3.3" stroke="#333" stroke-width="0.8" fill="#fff" />
<text x="637.2" y="183.3" font-size="2.6" fill="#444" text-anchor="middle" >A</text>
<text x="637.2" y="517.1" font-size="2.6" fill="#444" text-anchor="middle" >A</text>
<path d="M720.5 185.6 V512.6" stroke="#222" stroke-width="0.9" fill="none" stroke-dasharray="11 2.6 2 2.6"/>
<circle cx="720.5" cy="182.2" r="3.3" stroke="#333" stroke-width="0.8" fill="#fff" />
<circle cx="720.5" cy="516" r="3.3" stroke="#333" stroke-width="0.8" fill="#fff" />
<text x="720.5" y="183.3" font-size="2.6" fill="#444" text-anchor="middle" >A</text>
<text x="720.5" y="517.1" font-size="2.6" fill="#444" text-anchor="middle" >A</text>
<path d="M803.8 185.6 V512.6" stroke="#222" stroke-width="0.9" fill="none" stroke-dasharray="11 2.6 2 2.6"/>
<circle cx="803.8" cy="182.2" r="3.3" stroke="#333" stroke-width="0.8" fill="#fff" />
<circle cx="803.8" cy="516" r="3.3" stroke="#333" stroke-width="0.8" fill="#fff" />
<text x="803.8" y="183.3" font-size="2.6" fill="#444" text-anchor="middle" >A</text>
<text x="803.8" y="517.1" font-size="2.6" fill="#444" text-anchor="middle" >A</text>
<path d="M887.1 185.6 V512.6" stroke="#222" stroke-width="0.9" fill="none" stroke-dasharray="11 2.6 2 2.6"/>
<circle cx="887.1" cy="182.2" r="3.3" stroke="#333" stroke-width="0.8" fill="#fff" />
<circle cx="887.1" cy="516" r="3.3" stroke="#333" stroke-width="0.8" fill="#fff" />
<text x="887.1" y="183.3" font-size="2.6" fill="#444" text-anchor="middle" >A</text>
<text x="887.1" y="517.1" font-size="2.6" fill="#444" text-anchor="middle" >A</text>
<path d="M970.4 185.6 V512.6" stroke="#222" stroke-width="0.9" fill="none" stroke-dasharray="11 2.6 2 2.6"/>
<circle cx="970.4" cy="182.2" r="3.3" stroke="#333" stroke-width="0.8" fill="#fff" />
<circle cx="970.4" cy="516" r="3.3" stroke="#333" stroke-width="0.8" fill="#fff" />
<text x="970.4" y="183.3" font-size="2.6" fill="#444" text-anchor="middle" >A</text>
<text x="970.4" y="517.1" font-size="2.6" fill="#444" text-anchor="middle" >A</text>
<path d="M1053.7 185.6 V512.6" stroke="#222" stroke-width="0.9" fill="none" stroke-dasharray="11 2.6 2 2.6"/>
<circle cx="1053.7" cy="182.2" r="3.3" stroke="#333" stroke-width="0.8" fill="#fff" />
<circle cx="1053.7" cy="516" r="3.3" stroke="#333" stroke-width="0.8" fill="#fff" />
<text x="1053.7" y="183.3" font-size="2.6" fill="#444" text-anchor="middle" >A</text>
<text x="1053.7" y="517.1" font-size="2.6" fill="#444" text-anchor="middle" >A</text>
<path d="M1137.0 185.6 V512.6" stroke="#222" stroke-width="0.9" fill="none" stroke-dasharray="11 2.6 2 2.6"/>
<circle cx="1137" cy="182.2" r="3.3" stroke="#333" stroke-width="0.8" fill="#fff" />
<circle cx="1137" cy="516" r="3.3" stroke="#333" stroke-width="0.8" fill="#fff" />
<text x="1137" y="183.3" font-size="2.6" fill="#444" text-anchor="middle" >A</text>
<text x="1137" y="517.1" font-size="2.6" fill="#444" text-anchor="middle" >A</text>
<path d="M1220.3 185.6 V512.6" stroke="#222" stroke-width="0.9" fill="none" stroke-dasharray="11 2.6 2 2.6"/>
<circle cx="1220.3" cy="182.2" r="3.3" stroke="#333" stroke-width="0.8" fill="#fff" />
<circle cx="1220.3" cy="516" r="3.3" stroke="#333" stroke-width="0.8" fill="#fff" />
<text x="1220.3" y="183.3" font-size="2.6" fill="#444" text-anchor="middle" >A</text>
<text x="1220.3" y="517.1" font-size="2.6" fill="#444" text-anchor="middle" >A</text>
<path d="M434.8 223.2 H1266.8" stroke="#222" stroke-width="0.9" fill="none" stroke-dasharray="11 2.6 2 2.6"/>
<circle cx="431.4" cy="223.2" r="3.3" stroke="#333" stroke-width="0.8" fill="#fff" />
<circle cx="1270.2" cy="223.2" r="3.3" stroke="#333" stroke-width="0.8" fill="#fff" />
<text x="431.4" y="224.2" font-size="2.6" fill="#444" text-anchor="middle" >1</text>
<text x="1270.2" y="224.2" font-size="2.6" fill="#444" text-anchor="middle" >1</text>
<rect x="469.5" y="222.1" width="2.2" height="2.2" rx="0" stroke="none" stroke-width="0" fill="#222" />
<rect x="552.8" y="222.1" width="2.2" height="2.2" rx="0" stroke="none" stroke-width="0" fill="#222" />
<rect x="636.1" y="222.1" width="2.2" height="2.2" rx="0" stroke="none" stroke-width="0" fill="#222" />
<rect x="719.4" y="222.1" width="2.2" height="2.2" rx="0" stroke="none" stroke-width="0" fill="#222" />
<rect x="802.7" y="222.1" width="2.2" height="2.2" rx="0" stroke="none" stroke-width="0" fill="#222" />
<rect x="886" y="222.1" width="2.2" height="2.2" rx="0" stroke="none" stroke-width="0" fill="#222" />
<rect x="969.3" y="222.1" width="2.2" height="2.2" rx="0" stroke="none" stroke-width="0" fill="#222" />
<rect x="1052.6" y="222.1" width="2.2" height="2.2" rx="0" stroke="none" stroke-width="0" fill="#222" />
<rect x="1135.9" y="222.1" width="2.2" height="2.2" rx="0" stroke="none" stroke-width="0" fill="#222" />
<rect x="1219.2" y="222.1" width="2.2" height="2.2" rx="0" stroke="none" stroke-width="0" fill="#222" />
<path d="M434.8 306.6 H1266.8" stroke="#222" stroke-width="0.9" fill="none" stroke-dasharray="11 2.6 2 2.6"/>
<circle cx="431.4" cy="306.6" r="3.3" stroke="#333" stroke-width="0.8" fill="#fff" />
<circle cx="1270.2" cy="306.6" r="3.3" stroke="#333" stroke-width="0.8" fill="#fff" />
<text x="431.4" y="307.6" font-size="2.6" fill="#444" text-anchor="middle" >2</text>
<text x="1270.2" y="307.6" font-size="2.6" fill="#444" text-anchor="middle" >2</text>
<rect x="469.5" y="305.5" width="2.2" height="2.2" rx="0" stroke="none" stroke-width="0" fill="#222" />
<rect x="552.8" y="305.5" width="2.2" height="2.2" rx="0" stroke="none" stroke-width="0" fill="#222" />
<rect x="636.1" y="305.5" width="2.2" height="2.2" rx="0" stroke="none" stroke-width="0" fill="#222" />
<rect x="719.4" y="305.5" width="2.2" height="2.2" rx="0" stroke="none" stroke-width="0" fill="#222" />
<rect x="802.7" y="305.5" width="2.2" height="2.2" rx="0" stroke="none" stroke-width="0" fill="#222" />
<rect x="886" y="305.5" width="2.2" height="2.2" rx="0" stroke="none" stroke-width="0" fill="#222" />
<rect x="969.3" y="305.5" width="2.2" height="2.2" rx="0" stroke="none" stroke-width="0" fill="#222" />
<rect x="1052.6" y="305.5" width="2.2" height="2.2" rx="0" stroke="none" stroke-width="0" fill="#222" />
<rect x="1135.9" y="305.5" width="2.2" height="2.2" rx="0" stroke="none" stroke-width="0" fill="#222" />
<rect x="1219.2" y="305.5" width="2.2" height="2.2" rx="0" stroke="none" stroke-width="0" fill="#222" />
<path d="M434.8 390.0 H1266.8" stroke="#222" stroke-width="0.9" fill="none" stroke-dasharray="11 2.6 2 2.6"/>
<circle cx="431.4" cy="390" r="3.3" stroke="#333" stroke-width="0.8" fill="#fff" />
<circle cx="1270.2" cy="390" r="3.3" stroke="#333" stroke-width="0.8" fill="#fff" />
<text x="431.4" y="391" font-size="2.6" fill="#444" text-anchor="middle" >3</text>
<text x="1270.2" y="391" font-size="2.6" fill="#444" text-anchor="middle" >3</text>
<rect x="469.5" y="388.9" width="2.2" height="2.2" rx="0" stroke="none" stroke-width="0" fill="#222" />
<rect x="552.8" y="388.9" width="2.2" height="2.2" rx="0" stroke="none" stroke-width="0" fill="#222" />
<rect x="636.1" y="388.9" width="2.2" height="2.2" rx="0" stroke="none" stroke-width="0" fill="#222" />
<rect x="719.4" y="388.9" width="2.2" height="2.2" rx="0" stroke="none" stroke-width="0" fill="#222" />
<rect x="802.7" y="388.9" width="2.2" height="2.2" rx="0" stroke="none" stroke-width="0" fill="#222" />
<rect x="886" y="388.9" width="2.2" height="2.2" rx="0" stroke="none" stroke-width="0" fill="#222" />
<rect x="969.3" y="388.9" width="2.2" height="2.2" rx="0" stroke="none" stroke-width="0" fill="#222" />
<rect x="1052.6" y="388.9" width="2.2" height="2.2" rx="0" stroke="none" stroke-width="0" fill="#222" />
<rect x="1135.9" y="388.9" width="2.2" height="2.2" rx="0" stroke="none" stroke-width="0" fill="#222" />
<rect x="1219.2" y="388.9" width="2.2" height="2.2" rx="0" stroke="none" stroke-width="0" fill="#222" />
<path d="M434.8 473.4 H1266.8" stroke="#222" stroke-width="0.9" fill="none" stroke-dasharray="11 2.6 2 2.6"/>
<circle cx="431.4" cy="473.4" r="3.3" stroke="#333" stroke-width="0.8" fill="#fff" />
<circle cx="1270.2" cy="473.4" r="3.3" stroke="#333" stroke-width="0.8" fill="#fff" />
<text x="431.4" y="474.4" font-size="2.6" fill="#444" text-anchor="middle" >4</text>
<text x="1270.2" y="474.4" font-size="2.6" fill="#444" text-anchor="middle" >4</text>
<rect x="469.5" y="472.3" width="2.2" height="2.2" rx="0" stroke="none" stroke-width="0" fill="#222" />
<rect x="552.8" y="472.3" width="2.2" height="2.2" rx="0" stroke="none" stroke-width="0" fill="#222" />
<rect x="636.1" y="472.3" width="2.2" height="2.2" rx="0" stroke="none" stroke-width="0" fill="#222" />
<rect x="719.4" y="472.3" width="2.2" height="2.2" rx="0" stroke="none" stroke-width="0" fill="#222" />
<rect x="802.7" y="472.3" width="2.2" height="2.2" rx="0" stroke="none" stroke-width="0" fill="#222" />
<rect x="886" y="472.3" width="2.2" height="2.2" rx="0" stroke="none" stroke-width="0" fill="#222" />
<rect x="969.3" y="472.3" width="2.2" height="2.2" rx="0" stroke="none" stroke-width="0" fill="#222" />
<rect x="1052.6" y="472.3" width="2.2" height="2.2" rx="0" stroke="none" stroke-width="0" fill="#222" />
<rect x="1135.9" y="472.3" width="2.2" height="2.2" rx="0" stroke="none" stroke-width="0" fill="#222" />
<rect x="1219.2" y="472.3" width="2.2" height="2.2" rx="0" stroke="none" stroke-width="0" fill="#222" />
<path d="M470.6 201.2 H1220.3 M470.6 209.3 H1220.3" stroke="#333" stroke-width="0.8" fill="none" />
<path d="M470.6 199.6 V210.4" stroke="#333" stroke-width="0.6" fill="none" />
<circle cx="470.6" cy="209.3" r="0.8" stroke="none" stroke-width="0" fill="#222" />
<path d="M553.9 199.6 V210.4" stroke="#333" stroke-width="0.6" fill="none" />
<circle cx="553.9" cy="209.3" r="0.8" stroke="none" stroke-width="0" fill="#222" />
<path d="M637.2 199.6 V210.4" stroke="#333" stroke-width="0.6" fill="none" />
<circle cx="637.2" cy="209.3" r="0.8" stroke="none" stroke-width="0" fill="#222" />
<path d="M720.5 199.6 V210.4" stroke="#333" stroke-width="0.6" fill="none" />
<circle cx="720.5" cy="209.3" r="0.8" stroke="none" stroke-width="0" fill="#222" />
<path d="M803.8 199.6 V210.4" stroke="#333" stroke-width="0.6" fill="none" />
<circle cx="803.8" cy="209.3" r="0.8" stroke="none" stroke-width="0" fill="#222" />
<path d="M887.1 199.6 V210.4" stroke="#333" stroke-width="0.6" fill="none" />
<circle cx="887.1" cy="209.3" r="0.8" stroke="none" stroke-width="0" fill="#222" />
<path d="M970.4 199.6 V210.4" stroke="#333" stroke-width="0.6" fill="none" />
<circle cx="970.4" cy="209.3" r="0.8" stroke="none" stroke-width="0" fill="#222" />
<path d="M1053.7 199.6 V210.4" stroke="#333" stroke-width="0.6" fill="none" />
<circle cx="1053.7" cy="209.3" r="0.8" stroke="none" stroke-width="0" fill="#222" />
<path d="M1137.0 199.6 V210.4" stroke="#333" stroke-width="0.6" fill="none" />
<circle cx="1137" cy="209.3" r="0.8" stroke="none" stroke-width="0" fill="#222" />
<path d="M1220.3 199.6 V210.4" stroke="#333" stroke-width="0.6" fill="none" />
<circle cx="1220.3" cy="209.3" r="0.8" stroke="none" stroke-width="0" fill="#222" />
<text x="512.25" y="207.2" font-size="2.6" fill="#666" text-anchor="middle" >25'-0"</text>
<text x="595.55" y="207.2" font-size="2.6" fill="#666" text-anchor="middle" >25'-0"</text>
<text x="678.85" y="207.2" font-size="2.6" fill="#666" text-anchor="middle" >25'-0"</text>
<text x="762.15" y="207.2" font-size="2.6" fill="#666" text-anchor="middle" >25'-0"</text>
<text x="845.45" y="207.2" font-size="2.6" fill="#666" text-anchor="middle" >25'-0"</text>
<text x="928.75" y="207.2" font-size="2.6" fill="#666" text-anchor="middle" >25'-0"</text>
<text x="1012.05" y="207.2" font-size="2.6" fill="#666" text-anchor="middle" >25'-0"</text>
<text x="1095.35" y="207.2" font-size="2.6" fill="#666" text-anchor="middle" >25'-0"</text>
<text x="1178.65" y="207.2" font-size="2.6" fill="#666" text-anchor="middle" >25'-0"</text>
<text x="845.5" y="199.6" font-size="2.6" fill="#666" text-anchor="middle" >225'-0"</text>
<path d="M1241.5 223.2 V473.4 M1249.7 223.2 V473.4 M1229 223.2 H1253 M1229 473.4 H1253 M1239 390 H1244" stroke="#333" stroke-width="0.8" fill="none" />
<text x="1239.6" y="265" font-size="2.6" fill="#666" text-anchor="middle" transform="rotate(-90 1239.6 265)">25'-0"</text>
<text x="1239.6" y="432" font-size="2.6" fill="#666" text-anchor="middle" transform="rotate(-90 1239.6 432)">25'-0"</text>
<text x="1247.8" y="348" font-size="2.6" fill="#666" text-anchor="middle" transform="rotate(-90 1247.8 348)">75'-0"</text>
<g class="half-left">
<path d="M464.1 292.4 L804 265.9" stroke="#1c1c1c" stroke-width="0.9" fill="none" />
<path d="M464.1 292.4 L512 288.7" stroke="#1c1c1c" stroke-width="1.9" fill="none" />
<path d="M568 216.8 V279.3 Q568 284.3 573 283.9 L618.3 280.4 Q623.3 280.0 623.3 275.0 V216.8" stroke="#1c1c1c" stroke-width="1.9" fill="none" stroke-linejoin="round"/>
<path d="M595.7 216.8 V282.1 M568 246.9 H623.3" stroke="#1c1c1c" stroke-width="1.9" fill="none" />
<path d="M568 238.3 A8.6 8.6 0 0 1 568 255.5" stroke="#333" stroke-width="0.7" fill="none" />
<path d="M568 246.9 h8.8" stroke="#1c1c1c" stroke-width="3.3" fill="none" />
<circle cx="568.6" cy="241.1" r="2.5" stroke="#333" stroke-width="0.7" fill="#fff" />
<circle cx="568.6" cy="252.7" r="2.5" stroke="#333" stroke-width="0.7" fill="#fff" />
<path d="M623.3 238.3 A8.6 8.6 0 0 0 623.3 255.5" stroke="#333" stroke-width="0.7" fill="none" />
<path d="M623.3 246.9 h-8.8" stroke="#1c1c1c" stroke-width="3.3" fill="none" />
<circle cx="622.7" cy="241.1" r="2.5" stroke="#333" stroke-width="0.7" fill="#fff" />
<circle cx="622.7" cy="252.7" r="2.5" stroke="#333" stroke-width="0.7" fill="#fff" />
<path d="M650.8 216.8 V272.8 Q650.8 277.8 655.8 277.4 L707.3 273.4 V216.8" stroke="#1c1c1c" stroke-width="1.9" fill="none" stroke-linejoin="round"/>
<path d="M650.8 246.9 H707.3" stroke="#1c1c1c" stroke-width="1.9" fill="none" />
<path d="M650.8 238.3 A8.6 8.6 0 0 1 650.8 255.5" stroke="#333" stroke-width="0.7" fill="none" />
<path d="M650.8 246.9 h8.8" stroke="#1c1c1c" stroke-width="3.3" fill="none" />
<circle cx="651.4" cy="241.1" r="2.5" stroke="#333" stroke-width="0.7" fill="#fff" />
<circle cx="651.4" cy="252.7" r="2.5" stroke="#333" stroke-width="0.7" fill="#fff" />
<path d="M505 289.2 L511.70000000000005 288.7 Q516.7 288.3 516.7 293.3 V402.7 Q516.7 407.7 511.70000000000005 407.3 L464.1 403.8" stroke="#1c1c1c" stroke-width="1.9" fill="none" stroke-linejoin="round"/>
<path d="M464.1 319.5 H516.7 M464.1 375.7 H516.7" stroke="#1c1c1c" stroke-width="2.2" fill="none" />
<path d="M516.7 310.9 A8.6 8.6 0 0 0 516.7 328.1" stroke="#333" stroke-width="0.7" fill="none" />
<path d="M516.7 319.5 h-8.8" stroke="#1c1c1c" stroke-width="3.3" fill="none" />
<circle cx="516.1" cy="313.7" r="2.5" stroke="#333" stroke-width="0.7" fill="#fff" />
<circle cx="516.1" cy="325.3" r="2.5" stroke="#333" stroke-width="0.7" fill="#fff" />
<path d="M516.7 367.1 A8.6 8.6 0 0 0 516.7 384.3" stroke="#333" stroke-width="0.7" fill="none" />
<path d="M516.7 375.7 h-8.8" stroke="#1c1c1c" stroke-width="3.3" fill="none" />
<circle cx="516.1" cy="369.9" r="2.5" stroke="#333" stroke-width="0.7" fill="#fff" />
<circle cx="516.1" cy="381.5" r="2.5" stroke="#333" stroke-width="0.7" fill="#fff" />
<path d="M516.7 407.7 L640 416.9" stroke="#222" stroke-width="1.1" fill="none" />
<path d="M640 416.9 L800 428.8" stroke="#555" stroke-width="0.6" fill="none" />
<path d="M716 302.6 H539 Q534 302.6 534 307.6 V387.8 Q534 392.8 539 392.8 H716" stroke="#333" stroke-width="0.9" fill="none" stroke-dasharray="1 1.2"/>
<path d="M686.1 310.9 H545.6 Q540.6 310.9 540.6 315.9 V381.1 Q540.6 386.1 545.6 386.1 H686.1" stroke="#1c1c1c" stroke-width="1.5" fill="none" />
<path d="M716.6 310.9 H691.1 Q686.1 310.9 686.1 315.9 V381.1 Q686.1 386.1 691.1 386.1 H716.6" stroke="#1c1c1c" stroke-width="1.9" fill="none" />
<path d="M686.1 348.1 H716.6" stroke="#1c1c1c" stroke-width="1.9" fill="none" />
<path d="M686.1 339.5 A8.6 8.6 0 0 1 686.1 356.7" stroke="#333" stroke-width="0.7" fill="none" />
<path d="M686.1 348.1 h8.8" stroke="#1c1c1c" stroke-width="3.3" fill="none" />
<circle cx="686.7" cy="342.3" r="2.5" stroke="#333" stroke-width="0.7" fill="#fff" />
<circle cx="686.7" cy="353.9" r="2.5" stroke="#333" stroke-width="0.7" fill="#fff" />
<path d="M568 479.4 V419.5 Q568 414.5 573 414.9 L618.3 417.7 Q623.3 418.1 623.3 423.1 V479.4" stroke="#1c1c1c" stroke-width="1.9" fill="none" stroke-linejoin="round"/>
<path d="M568 445.4 H623.3" stroke="#1c1c1c" stroke-width="1.9" fill="none" />
<path d="M623.3 436.8 A8.6 8.6 0 0 0 623.3 454" stroke="#333" stroke-width="0.7" fill="none" />
<path d="M623.3 445.4 h-8.8" stroke="#1c1c1c" stroke-width="3.3" fill="none" />
<circle cx="622.7" cy="439.6" r="2.5" stroke="#333" stroke-width="0.7" fill="#fff" />
<circle cx="622.7" cy="451.2" r="2.5" stroke="#333" stroke-width="0.7" fill="#fff" />
<path d="M651.2 479.4 V424.7 Q651.2 419.7 656.2 420.1 L702.3 423.1 Q707.3 423.5 707.3 428.5 V479.4 Z" stroke="none" stroke-width="0" fill="#d6d6fa" />
<path d="M651.2 479.4 V424.7 Q651.2 419.7 656.2 420.1 L702.3 423.1 Q707.3 423.5 707.3 428.5 V479.4" stroke="#1c1c1c" stroke-width="1.9" fill="none" stroke-linejoin="round"/>
<path d="M678.8 421.8 V479.4 M651.2 450.6 H707.3" stroke="#1c1c1c" stroke-width="1.9" fill="none" />
<path d="M651.2 442 A8.6 8.6 0 0 1 651.2 459.2" stroke="#333" stroke-width="0.7" fill="none" />
<path d="M651.2 450.6 h8.8" stroke="#1c1c1c" stroke-width="3.3" fill="none" />
<circle cx="651.8" cy="444.8" r="2.5" stroke="#333" stroke-width="0.7" fill="#fff" />
<circle cx="651.8" cy="456.4" r="2.5" stroke="#333" stroke-width="0.7" fill="#fff" />
<path d="M707.3 442 A8.6 8.6 0 0 0 707.3 459.2" stroke="#333" stroke-width="0.7" fill="none" />
<path d="M707.3 450.6 h-8.8" stroke="#1c1c1c" stroke-width="3.3" fill="none" />
<circle cx="706.7" cy="444.8" r="2.5" stroke="#333" stroke-width="0.7" fill="#fff" />
<circle cx="706.7" cy="456.4" r="2.5" stroke="#333" stroke-width="0.7" fill="#fff" />
<path d="M734.3 479.4 V430.4 Q734.3 425.4 739.3 425.7 L785.4 428.8 Q790.4 429.1 790.4 434.1 V479.4" stroke="#1c1c1c" stroke-width="1.9" fill="none" stroke-linejoin="round"/>
<path d="M761.7 427.2 V479.4 M734.3 450.5 H790.4" stroke="#1c1c1c" stroke-width="1.9" fill="none" />
<path d="M734.3 441.9 A8.6 8.6 0 0 1 734.3 459.1" stroke="#333" stroke-width="0.7" fill="none" />
<path d="M734.3 450.5 h8.8" stroke="#1c1c1c" stroke-width="3.3" fill="none" />
<circle cx="734.9" cy="444.7" r="2.5" stroke="#333" stroke-width="0.7" fill="#fff" />
<circle cx="734.9" cy="456.3" r="2.5" stroke="#333" stroke-width="0.7" fill="#fff" />
<path d="M790.4 441.9 A8.6 8.6 0 0 0 790.4 459.1" stroke="#333" stroke-width="0.7" fill="none" />
<path d="M790.4 450.5 h-8.8" stroke="#1c1c1c" stroke-width="3.3" fill="none" />
<circle cx="789.8" cy="444.7" r="2.5" stroke="#333" stroke-width="0.7" fill="#fff" />
<circle cx="789.8" cy="456.3" r="2.5" stroke="#333" stroke-width="0.7" fill="#fff" />
<path d="M717.1 300.5 Q717.1 294.2 723 294.2 H733.7 V303.7 M759.5 302.3 V296.7 L821.2 300.7 Q829.7 301.6 829.7 310 V386 Q829.7 393.6 821.2 394.6 L760.5 399.1 V394.4 M733.9 393 V403 H723 Q717.1 403 717.1 397 V300.5" stroke="#1f1f1f" stroke-width="1.9" fill="none" stroke-linejoin="round"/>
<path d="M759.5 302.3 L821 302.8 M760.5 394.4 L821 392.6" stroke="#222" stroke-width="1.1" fill="none" />
<path d="M720.2 300 V398" stroke="#333" stroke-width="0.8" fill="none" stroke-dasharray="2 1.4"/>
<path d="M723.2 404.6 L800.9 399.7" stroke="#222" stroke-width="1.1" fill="none" stroke-dasharray="3 1.8"/>
<rect x="811.8" y="311.7" width="16.2" height="22.8" rx="0" stroke="#6a6a6a" stroke-width="1.6" fill="none" />
<path d="M811.8 311.7 L828 334.5 M828 311.7 L811.8 334.5" stroke="#555" stroke-width="0.8" fill="none" />
<rect x="811.8" y="337.5" width="16.2" height="21.7" rx="0" stroke="#6a6a6a" stroke-width="1.6" fill="none" />
<path d="M811.8 337.5 L828 359.2 M828 337.5 L811.8 359.2" stroke="#555" stroke-width="0.8" fill="none" />
<rect x="811.8" y="334.5" width="16.2" height="3" rx="0" stroke="none" stroke-width="0" fill="#8a8a8a" />
<rect x="811.8" y="359.2" width="16.2" height="2.8" rx="0" stroke="none" stroke-width="0" fill="#8a8a8a" />
<rect x="812.2" y="372.3" width="14" height="11.6" rx="0" stroke="#555" stroke-width="1.3" fill="none" />
<path d="M812.2 372.3 L826.2 383.9 M826.2 372.3 L812.2 383.9" stroke="#555" stroke-width="0.7" fill="none" />
<rect x="819.6" y="364.2" width="6.6" height="6.1" rx="0" stroke="#555" stroke-width="1" fill="none" />
<path d="M819.6 370.3 L826.2 364.2" stroke="#555" stroke-width="0.7" fill="none" />
<path d="M809.6 362 V392" stroke="#1c1c1c" stroke-width="1.2" fill="none" stroke-dasharray="2.4 1.6"/>
<path d="M722.4 303.7 H808.4 M723.6 302.5 V393.8 M722.4 355.6 H808.4 M722.4 392.6 H792.3" stroke="#1c1c1c" stroke-width="2.6" fill="none" />
<path d="M746.4 303.7 V393.8 M807.1 303.7 V385.4" stroke="#1c1c1c" stroke-width="3" fill="none" />
</g>
<g class="half-right" transform="translate(1691.4 0) scale(-1 1)">
<path d="M464.1 292.4 L804 265.9" stroke="#1c1c1c" stroke-width="0.9" fill="none" />
<path d="M464.1 292.4 L512 288.7" stroke="#1c1c1c" stroke-width="1.9" fill="none" />
<path d="M568 216.8 V279.3 Q568 284.3 573 283.9 L618.3 280.4 Q623.3 280.0 623.3 275.0 V216.8" stroke="#1c1c1c" stroke-width="1.9" fill="none" stroke-linejoin="round"/>
<path d="M595.7 216.8 V282.1 M568 246.9 H623.3" stroke="#1c1c1c" stroke-width="1.9" fill="none" />
<path d="M568 238.3 A8.6 8.6 0 0 1 568 255.5" stroke="#333" stroke-width="0.7" fill="none" />
<path d="M568 246.9 h8.8" stroke="#1c1c1c" stroke-width="3.3" fill="none" />
<circle cx="568.6" cy="241.1" r="2.5" stroke="#333" stroke-width="0.7" fill="#fff" />
<circle cx="568.6" cy="252.7" r="2.5" stroke="#333" stroke-width="0.7" fill="#fff" />
<path d="M623.3 238.3 A8.6 8.6 0 0 0 623.3 255.5" stroke="#333" stroke-width="0.7" fill="none" />
<path d="M623.3 246.9 h-8.8" stroke="#1c1c1c" stroke-width="3.3" fill="none" />
<circle cx="622.7" cy="241.1" r="2.5" stroke="#333" stroke-width="0.7" fill="#fff" />
<circle cx="622.7" cy="252.7" r="2.5" stroke="#333" stroke-width="0.7" fill="#fff" />
<path d="M650.8 216.8 V272.8 Q650.8 277.8 655.8 277.4 L707.3 273.4 V216.8" stroke="#1c1c1c" stroke-width="1.9" fill="none" stroke-linejoin="round"/>
<path d="M650.8 246.9 H707.3" stroke="#1c1c1c" stroke-width="1.9" fill="none" />
<path d="M650.8 238.3 A8.6 8.6 0 0 1 650.8 255.5" stroke="#333" stroke-width="0.7" fill="none" />
<path d="M650.8 246.9 h8.8" stroke="#1c1c1c" stroke-width="3.3" fill="none" />
<circle cx="651.4" cy="241.1" r="2.5" stroke="#333" stroke-width="0.7" fill="#fff" />
<circle cx="651.4" cy="252.7" r="2.5" stroke="#333" stroke-width="0.7" fill="#fff" />
<path d="M505 289.2 L511.70000000000005 288.7 Q516.7 288.3 516.7 293.3 V402.7 Q516.7 407.7 511.70000000000005 407.3 L464.1 403.8" stroke="#1c1c1c" stroke-width="1.9" fill="none" stroke-linejoin="round"/>
<path d="M464.1 319.5 H516.7 M464.1 375.7 H516.7" stroke="#1c1c1c" stroke-width="2.2" fill="none" />
<path d="M516.7 310.9 A8.6 8.6 0 0 0 516.7 328.1" stroke="#333" stroke-width="0.7" fill="none" />
<path d="M516.7 319.5 h-8.8" stroke="#1c1c1c" stroke-width="3.3" fill="none" />
<circle cx="516.1" cy="313.7" r="2.5" stroke="#333" stroke-width="0.7" fill="#fff" />
<circle cx="516.1" cy="325.3" r="2.5" stroke="#333" stroke-width="0.7" fill="#fff" />
<path d="M516.7 367.1 A8.6 8.6 0 0 0 516.7 384.3" stroke="#333" stroke-width="0.7" fill="none" />
<path d="M516.7 375.7 h-8.8" stroke="#1c1c1c" stroke-width="3.3" fill="none" />
<circle cx="516.1" cy="369.9" r="2.5" stroke="#333" stroke-width="0.7" fill="#fff" />
<circle cx="516.1" cy="381.5" r="2.5" stroke="#333" stroke-width="0.7" fill="#fff" />
<path d="M516.7 407.7 L640 416.9" stroke="#222" stroke-width="1.1" fill="none" />
<path d="M640 416.9 L800 428.8" stroke="#555" stroke-width="0.6" fill="none" />
<path d="M716 302.6 H539 Q534 302.6 534 307.6 V387.8 Q534 392.8 539 392.8 H716" stroke="#333" stroke-width="0.9" fill="none" stroke-dasharray="1 1.2"/>
<path d="M686.1 310.9 H545.6 Q540.6 310.9 540.6 315.9 V381.1 Q540.6 386.1 545.6 386.1 H686.1" stroke="#1c1c1c" stroke-width="1.5" fill="none" />
<path d="M716.6 310.9 H691.1 Q686.1 310.9 686.1 315.9 V381.1 Q686.1 386.1 691.1 386.1 H716.6" stroke="#1c1c1c" stroke-width="1.9" fill="none" />
<path d="M686.1 348.1 H716.6" stroke="#1c1c1c" stroke-width="1.9" fill="none" />
<path d="M686.1 339.5 A8.6 8.6 0 0 1 686.1 356.7" stroke="#333" stroke-width="0.7" fill="none" />
<path d="M686.1 348.1 h8.8" stroke="#1c1c1c" stroke-width="3.3" fill="none" />
<circle cx="686.7" cy="342.3" r="2.5" stroke="#333" stroke-width="0.7" fill="#fff" />
<circle cx="686.7" cy="353.9" r="2.5" stroke="#333" stroke-width="0.7" fill="#fff" />
<path d="M568 479.4 V419.5 Q568 414.5 573 414.9 L618.3 417.7 Q623.3 418.1 623.3 423.1 V479.4" stroke="#1c1c1c" stroke-width="1.9" fill="none" stroke-linejoin="round"/>
<path d="M568 445.4 H623.3" stroke="#1c1c1c" stroke-width="1.9" fill="none" />
<path d="M623.3 436.8 A8.6 8.6 0 0 0 623.3 454" stroke="#333" stroke-width="0.7" fill="none" />
<path d="M623.3 445.4 h-8.8" stroke="#1c1c1c" stroke-width="3.3" fill="none" />
<circle cx="622.7" cy="439.6" r="2.5" stroke="#333" stroke-width="0.7" fill="#fff" />
<circle cx="622.7" cy="451.2" r="2.5" stroke="#333" stroke-width="0.7" fill="#fff" />
<path d="M651.2 479.4 V424.7 Q651.2 419.7 656.2 420.1 L702.3 423.1 Q707.3 423.5 707.3 428.5 V479.4 Z" stroke="none" stroke-width="0" fill="#d6d6fa" />
<path d="M651.2 479.4 V424.7 Q651.2 419.7 656.2 420.1 L702.3 423.1 Q707.3 423.5 707.3 428.5 V479.4" stroke="#1c1c1c" stroke-width="1.9" fill="none" stroke-linejoin="round"/>
<path d="M678.8 421.8 V479.4 M651.2 450.6 H707.3" stroke="#1c1c1c" stroke-width="1.9" fill="none" />
<path d="M651.2 442 A8.6 8.6 0 0 1 651.2 459.2" stroke="#333" stroke-width="0.7" fill="none" />
<path d="M651.2 450.6 h8.8" stroke="#1c1c1c" stroke-width="3.3" fill="none" />
<circle cx="651.8" cy="444.8" r="2.5" stroke="#333" stroke-width="0.7" fill="#fff" />
<circle cx="651.8" cy="456.4" r="2.5" stroke="#333" stroke-width="0.7" fill="#fff" />
<path d="M707.3 442 A8.6 8.6 0 0 0 707.3 459.2" stroke="#333" stroke-width="0.7" fill="none" />
<path d="M707.3 450.6 h-8.8" stroke="#1c1c1c" stroke-width="3.3" fill="none" />
<circle cx="706.7" cy="444.8" r="2.5" stroke="#333" stroke-width="0.7" fill="#fff" />
<circle cx="706.7" cy="456.4" r="2.5" stroke="#333" stroke-width="0.7" fill="#fff" />
<path d="M734.3 479.4 V430.4 Q734.3 425.4 739.3 425.7 L785.4 428.8 Q790.4 429.1 790.4 434.1 V479.4" stroke="#1c1c1c" stroke-width="1.9" fill="none" stroke-linejoin="round"/>
<path d="M761.7 427.2 V479.4 M734.3 450.5 H790.4" stroke="#1c1c1c" stroke-width="1.9" fill="none" />
<path d="M734.3 441.9 A8.6 8.6 0 0 1 734.3 459.1" stroke="#333" stroke-width="0.7" fill="none" />
<path d="M734.3 450.5 h8.8" stroke="#1c1c1c" stroke-width="3.3" fill="none" />
<circle cx="734.9" cy="444.7" r="2.5" stroke="#333" stroke-width="0.7" fill="#fff" />
<circle cx="734.9" cy="456.3" r="2.5" stroke="#333" stroke-width="0.7" fill="#fff" />
<path d="M790.4 441.9 A8.6 8.6 0 0 0 790.4 459.1" stroke="#333" stroke-width="0.7" fill="none" />
<path d="M790.4 450.5 h-8.8" stroke="#1c1c1c" stroke-width="3.3" fill="none" />
<circle cx="789.8" cy="444.7" r="2.5" stroke="#333" stroke-width="0.7" fill="#fff" />
<circle cx="789.8" cy="456.3" r="2.5" stroke="#333" stroke-width="0.7" fill="#fff" />
<path d="M717.1 300.5 Q717.1 294.2 723 294.2 H733.7 V303.7 M759.5 302.3 V296.7 L821.2 300.7 Q829.7 301.6 829.7 310 V386 Q829.7 393.6 821.2 394.6 L760.5 399.1 V394.4 M733.9 393 V403 H723 Q717.1 403 717.1 397 V300.5" stroke="#1f1f1f" stroke-width="1.9" fill="none" stroke-linejoin="round"/>
<path d="M759.5 302.3 L821 302.8 M760.5 394.4 L821 392.6" stroke="#222" stroke-width="1.1" fill="none" />
<path d="M720.2 300 V398" stroke="#333" stroke-width="0.8" fill="none" stroke-dasharray="2 1.4"/>
<path d="M723.2 404.6 L800.9 399.7" stroke="#222" stroke-width="1.1" fill="none" stroke-dasharray="3 1.8"/>
<rect x="811.8" y="311.7" width="16.2" height="22.8" rx="0" stroke="#6a6a6a" stroke-width="1.6" fill="none" />
<path d="M811.8 311.7 L828 334.5 M828 311.7 L811.8 334.5" stroke="#555" stroke-width="0.8" fill="none" />
<rect x="811.8" y="337.5" width="16.2" height="21.7" rx="0" stroke="#6a6a6a" stroke-width="1.6" fill="none" />
<path d="M811.8 337.5 L828 359.2 M828 337.5 L811.8 359.2" stroke="#555" stroke-width="0.8" fill="none" />
<rect x="811.8" y="334.5" width="16.2" height="3" rx="0" stroke="none" stroke-width="0" fill="#8a8a8a" />
<rect x="811.8" y="359.2" width="16.2" height="2.8" rx="0" stroke="none" stroke-width="0" fill="#8a8a8a" />
<rect x="812.2" y="372.3" width="14" height="11.6" rx="0" stroke="#555" stroke-width="1.3" fill="none" />
<path d="M812.2 372.3 L826.2 383.9 M826.2 372.3 L812.2 383.9" stroke="#555" stroke-width="0.7" fill="none" />
<rect x="819.6" y="364.2" width="6.6" height="6.1" rx="0" stroke="#555" stroke-width="1" fill="none" />
<path d="M819.6 370.3 L826.2 364.2" stroke="#555" stroke-width="0.7" fill="none" />
<path d="M809.6 362 V392" stroke="#1c1c1c" stroke-width="1.2" fill="none" stroke-dasharray="2.4 1.6"/>
<path d="M722.4 303.7 H808.4 M723.6 302.5 V393.8 M722.4 355.6 H808.4 M722.4 392.6 H792.3" stroke="#1c1c1c" stroke-width="2.6" fill="none" />
<path d="M746.4 303.7 V393.8 M807.1 303.7 V385.4" stroke="#1c1c1c" stroke-width="3" fill="none" />
</g>
<rect x="464.1" y="216.8" width="763.3" height="262.6" rx="0" stroke="#1c1c1c" stroke-width="2.1" fill="none" />
<path d="M725.4 327.0 H745" stroke="#222" stroke-width="0.8" fill="none" />
<path d="M725.4 329.2 H745" stroke="#222" stroke-width="0.8" fill="none" />
<path d="M725.4 331.4 H745" stroke="#222" stroke-width="0.8" fill="none" />
<path d="M725.4 333.6 H745" stroke="#222" stroke-width="0.8" fill="none" />
<path d="M725.4 335.8 H745" stroke="#222" stroke-width="0.8" fill="none" />
<path d="M725.4 338.0 H745" stroke="#222" stroke-width="0.8" fill="none" />
<path d="M725.4 340.2 H745" stroke="#222" stroke-width="0.8" fill="none" />
<path d="M725.4 342.4 H745" stroke="#222" stroke-width="0.8" fill="none" />
<path d="M725.4 344.6 H745" stroke="#222" stroke-width="0.8" fill="none" />
<path d="M725.4 346.8 H745" stroke="#222" stroke-width="0.8" fill="none" />
<path d="M733.4 326 V349 M737 326 V349" stroke="#1c1c1c" stroke-width="1.3" fill="none" />
<path d="M724 326 H746 M724 349.6 H735" stroke="#1c1c1c" stroke-width="1.4" fill="none" />
<path d="M725 352.2 H790" stroke="#222" stroke-width="0.9" fill="none" stroke-dasharray="2.6 1.6"/>
<path d="M746.4 331.9 H777.2 V310" stroke="#1c1c1c" stroke-width="2.4" fill="none" />
<path d="M749.6 323.4 V331" stroke="#222" stroke-width="1.2" fill="none" />
<path d="M753.0 323.4 V331" stroke="#222" stroke-width="1.2" fill="none" />
<path d="M756.4 323.4 V331" stroke="#222" stroke-width="1.2" fill="none" />
<path d="M759.8 323.4 V331" stroke="#222" stroke-width="1.2" fill="none" />
<path d="M763.2 323.4 V331" stroke="#222" stroke-width="1.2" fill="none" />
<path d="M766.6 323.4 V331" stroke="#222" stroke-width="1.2" fill="none" />
<path d="M770.0 323.4 V331" stroke="#222" stroke-width="1.2" fill="none" />
<path d="M773.4 323.4 V331" stroke="#222" stroke-width="1.2" fill="none" />
<path d="M748 323.4 H776" stroke="#222" stroke-width="0.9" fill="none" />
<path d="M787.8 300.8 V357.7 M811 300.8 V357.7 M787.8 300.8 H811" stroke="#4a5cc4" stroke-width="0.9" fill="none" stroke-dasharray="1.6 1.2"/>
<rect x="794.3" y="303.7" width="12.2" height="51.5" rx="0" stroke="#16352d" stroke-width="2.4" fill="none" />
<path d="M794.3 304 L806.5 355 M806.5 304 L794.3 355" stroke="#2a9d6a" stroke-width="0.7" fill="none" />
<path d="M765 355.6 V374.3 H752.6" stroke="#1c1c1c" stroke-width="2.4" fill="none" />
<path d="M774.1 355.6 V370.4 M782.7 355.6 V370.4" stroke="#1c1c1c" stroke-width="1.9" fill="none" />
<path d="M791.3 355.6 V375" stroke="#1c1c1c" stroke-width="2.4" fill="none" />
<circle cx="769.6" cy="361.2" r="1.6" stroke="none" stroke-width="0" fill="#222" />
<circle cx="778.4" cy="361.2" r="1.6" stroke="none" stroke-width="0" fill="#222" />
<circle cx="787.2" cy="361.2" r="1.6" stroke="none" stroke-width="0" fill="#222" />
<path d="M748 358 H752 V362 H748 M764 357 L758 367" stroke="#1c1c1c" stroke-width="1" fill="none" />
<circle cx="758" cy="367" r="0.8" stroke="none" stroke-width="0" fill="#1c1c1c" />
<rect x="765" y="386" width="27.3" height="6.5" rx="0" stroke="#1c1c1c" stroke-width="2" fill="none" />
<rect x="769.6" y="387.6" width="5.4" height="3.4" rx="0" stroke="#1c1c1c" stroke-width="1.2" fill="#333" />
<rect x="781.4" y="387.6" width="5.4" height="3.4" rx="0" stroke="#1c1c1c" stroke-width="1.2" fill="#333" />
<path d="M725.6 374 H730.4 V391 M725.6 380 H730.4" stroke="#1c1c1c" stroke-width="1.2" fill="none" />
<rect x="726" y="381.6" width="4" height="4.8" rx="0" stroke="#1c1c1c" stroke-width="1" fill="#444" />
<path d="M747.8 375 A4.6 4.6 0 0 1 757 375" stroke="#333" stroke-width="0.6" fill="none" />
<circle cx="752.4" cy="375" r="2.4" stroke="#333" stroke-width="0.7" fill="#fff" />
<path d="M791 380 A4.6 4.6 0 0 1 800.2 380" stroke="#333" stroke-width="0.6" fill="none" />
<circle cx="795.6" cy="380" r="2.4" stroke="#333" stroke-width="0.7" fill="#fff" />
<path d="M736.4 392.6 A4.6 4.6 0 0 1 745.6 392.6" stroke="#333" stroke-width="0.6" fill="none" />
<circle cx="741" cy="392.6" r="2.4" stroke="#333" stroke-width="0.7" fill="#fff" />
<path d="M747.8 392.6 A4.6 4.6 0 0 1 757 392.6" stroke="#333" stroke-width="0.6" fill="none" />
<circle cx="752.4" cy="392.6" r="2.4" stroke="#333" stroke-width="0.7" fill="#fff" />
<path d="M736.4 303.4 A4.6 4.6 0 0 1 745.6 303.4" stroke="#333" stroke-width="0.6" fill="none" />
<circle cx="741" cy="303.4" r="2.4" stroke="#333" stroke-width="0.7" fill="#fff" />
<path d="M748 303.4 A4.6 4.6 0 0 1 757.2 303.4" stroke="#333" stroke-width="0.6" fill="none" />
<circle cx="752.6" cy="303.4" r="2.4" stroke="#333" stroke-width="0.7" fill="#fff" />
<path d="M774.8 308.4 A4.6 4.6 0 0 1 784 308.4" stroke="#333" stroke-width="0.6" fill="none" />
<circle cx="779.4" cy="308.4" r="2.4" stroke="#333" stroke-width="0.7" fill="#fff" />
<circle cx="798.9" cy="369.8" r="6.7" stroke="none" stroke-width="0" fill="#f26060" />
<path d="M877.8 296.0 A2.12 2.12 0 0 1 881.8 296.0 A2.12 2.12 0 0 1 885.9 296.0 A2.12 2.12 0 0 1 889.9 296.0 A2.12 2.12 0 0 1 894.0 296.0 A2.12 2.12 0 0 1 898.0 296.0 A2.12 2.12 0 0 1 902.1 296.0 A2.12 2.12 0 0 1 906.1 296.0 A2.12 2.12 0 0 1 910.1 296.0 A2.12 2.12 0 0 1 914.2 296.0 A2.12 2.12 0 0 1 918.2 296.0 A2.12 2.12 0 0 1 922.3 296.0 A2.12 2.12 0 0 1 926.3 296.0 A2.12 2.12 0 0 1 930.3 296.0 A2.12 2.12 0 0 1 934.4 296.0 A2.12 2.12 0 0 1 938.4 296.0 A2.12 2.12 0 0 1 942.5 296.0 A2.12 2.12 0 0 1 946.5 296.0 A2.12 2.12 0 0 1 950.6 296.0 A2.12 2.12 0 0 1 954.6 296.0 A2.08 2.08 0 0 1 954.6 300.0 A2.08 2.08 0 0 1 954.6 303.9 A2.08 2.08 0 0 1 954.6 307.9 A2.08 2.08 0 0 1 954.6 311.9 A2.08 2.08 0 0 1 954.6 315.8 A2.08 2.08 0 0 1 954.6 319.8 A2.08 2.08 0 0 1 954.6 323.8 A2.08 2.08 0 0 1 954.6 327.7 A2.08 2.08 0 0 1 954.6 331.7 A2.08 2.08 0 0 1 954.6 335.6 A2.08 2.08 0 0 1 954.6 339.6 A2.08 2.08 0 0 1 954.6 343.6 A2.08 2.08 0 0 1 954.6 347.5 A2.08 2.08 0 0 1 954.6 351.5 A2.08 2.08 0 0 1 954.6 355.5 A2.08 2.08 0 0 1 954.6 359.4 A2.08 2.08 0 0 1 954.6 363.4 A2.12 2.12 0 0 1 950.6 363.4 A2.12 2.12 0 0 1 946.5 363.4 A2.12 2.12 0 0 1 942.5 363.4 A2.12 2.12 0 0 1 938.4 363.4 A2.12 2.12 0 0 1 934.4 363.4 A2.12 2.12 0 0 1 930.3 363.4 A2.12 2.12 0 0 1 926.3 363.4 A2.12 2.12 0 0 1 922.3 363.4 A2.12 2.12 0 0 1 918.2 363.4 A2.12 2.12 0 0 1 914.2 363.4 A2.12 2.12 0 0 1 910.1 363.4 A2.12 2.12 0 0 1 906.1 363.4 A2.12 2.12 0 0 1 902.1 363.4 A2.12 2.12 0 0 1 898.0 363.4 A2.12 2.12 0 0 1 894.0 363.4 A2.12 2.12 0 0 1 889.9 363.4 A2.12 2.12 0 0 1 885.9 363.4 A2.12 2.12 0 0 1 881.8 363.4 A2.12 2.12 0 0 1 877.8 363.4 A2.08 2.08 0 0 1 877.8 359.4 A2.08 2.08 0 0 1 877.8 355.5 A2.08 2.08 0 0 1 877.8 351.5 A2.08 2.08 0 0 1 877.8 347.5 A2.08 2.08 0 0 1 877.8 343.6 A2.08 2.08 0 0 1 877.8 339.6 A2.08 2.08 0 0 1 877.8 335.6 A2.08 2.08 0 0 1 877.8 331.7 A2.08 2.08 0 0 1 877.8 327.7 A2.08 2.08 0 0 1 877.8 323.8 A2.08 2.08 0 0 1 877.8 319.8 A2.08 2.08 0 0 1 877.8 315.8 A2.08 2.08 0 0 1 877.8 311.9 A2.08 2.08 0 0 1 877.8 307.9 A2.08 2.08 0 0 1 877.8 303.9 A2.08 2.08 0 0 1 877.8 300.0 A2.08 2.08 0 0 1 877.8 296.0 Z" stroke="#4a5cc4" stroke-width="0.8" fill="none" />
<rect x="884.4" y="303.7" width="60.6" height="51.5" rx="0" stroke="#0e2a33" stroke-width="2.8" fill="none" />
<rect x="890" y="314.3" width="13.4" height="31.3" rx="0" stroke="#123" stroke-width="0.8" fill="none" stroke-dasharray="1.4 1"/>
<path d="M893.5 314.3 V345.6 M899.9 314.3 V345.6" stroke="#123" stroke-width="1.3" fill="none" />
<path d="M890 324.9 H903.4 M890 335 H903.4" stroke="#123" stroke-width="0.9" fill="none" />
<rect x="906.2" y="314.3" width="13.4" height="31.3" rx="0" stroke="#123" stroke-width="0.8" fill="none" stroke-dasharray="1.4 1"/>
<path d="M909.7 314.3 V345.6 M916.1 314.3 V345.6" stroke="#123" stroke-width="1.3" fill="none" />
<path d="M906.2 324.9 H919.6 M906.2 335 H919.6" stroke="#123" stroke-width="0.9" fill="none" />
<rect x="922.4" y="314.3" width="13.4" height="31.3" rx="0" stroke="#123" stroke-width="0.8" fill="none" stroke-dasharray="1.4 1"/>
<path d="M925.9 314.3 V345.6 M932.3 314.3 V345.6" stroke="#123" stroke-width="1.3" fill="none" />
<path d="M922.4 324.9 H935.8 M922.4 335 H935.8" stroke="#123" stroke-width="0.9" fill="none" />
<path d="M966.2 303.7 V393.8" stroke="#1c1c1c" stroke-width="2.6" fill="none" />
<path d="M945 340.5 H966.2" stroke="#1c1c1c" stroke-width="2.4" fill="none" />
<path d="M945 303.7 V393.8" stroke="#1c1c1c" stroke-width="2.8" fill="none" />
<path d="M947 349.0 H953.6 M955.8 349.0 H965" stroke="#222" stroke-width="0.8" fill="none" />
<path d="M947 351.2 H953.6 M955.8 351.2 H965" stroke="#222" stroke-width="0.8" fill="none" />
<path d="M947 353.4 H953.6 M955.8 353.4 H965" stroke="#222" stroke-width="0.8" fill="none" />
<path d="M947 355.6 H953.6 M955.8 355.6 H965" stroke="#222" stroke-width="0.8" fill="none" />
<path d="M947 357.8 H953.6 M955.8 357.8 H965" stroke="#222" stroke-width="0.8" fill="none" />
<path d="M947 360.0 H953.6 M955.8 360.0 H965" stroke="#222" stroke-width="0.8" fill="none" />
<path d="M947 362.2 H953.6 M955.8 362.2 H965" stroke="#222" stroke-width="0.8" fill="none" />
<path d="M947 364.4 H953.6 M955.8 364.4 H965" stroke="#222" stroke-width="0.8" fill="none" />
<path d="M947 366.6 H953.6 M955.8 366.6 H965" stroke="#222" stroke-width="0.8" fill="none" />
<path d="M954.7 347 V368" stroke="#1c1c1c" stroke-width="1.3" fill="none" />
<path d="M899.6 355.6 V370.4 M908.2 355.6 V370.4 M916.8 355.6 V370.4 M926 355.6 V366" stroke="#1c1c1c" stroke-width="1.9" fill="none" />
<circle cx="895.2" cy="361.2" r="1.6" stroke="none" stroke-width="0" fill="#222" />
<circle cx="904" cy="361.2" r="1.6" stroke="none" stroke-width="0" fill="#222" />
<circle cx="912.6" cy="361.2" r="1.6" stroke="none" stroke-width="0" fill="#222" />
<path d="M899.6 371 H905 L911 379 H925 L931 371 H945" stroke="#1c1c1c" stroke-width="1.3" fill="none" />
<rect x="899" y="386" width="27.4" height="6.5" rx="0" stroke="#1c1c1c" stroke-width="2" fill="none" />
<rect x="903.6" y="387.6" width="5.4" height="3.4" rx="0" stroke="#1c1c1c" stroke-width="1.2" fill="#333" />
<rect x="915.4" y="387.6" width="5.4" height="3.4" rx="0" stroke="#1c1c1c" stroke-width="1.2" fill="#333" />
<path d="M884.4 355.6 V393.8 M884.4 392.6 H899" stroke="#1c1c1c" stroke-width="2.4" fill="none" />
<path d="M891.2 380 A4.6 4.6 0 0 1 900.4 380" stroke="#333" stroke-width="0.6" fill="none" />
<circle cx="895.8" cy="380" r="2.4" stroke="#333" stroke-width="0.7" fill="#fff" />
<path d="M934.2 375 A4.6 4.6 0 0 1 943.4 375" stroke="#333" stroke-width="0.6" fill="none" />
<circle cx="938.8" cy="375" r="2.4" stroke="#333" stroke-width="0.7" fill="#fff" />
<path d="M934.2 392.6 A4.6 4.6 0 0 1 943.4 392.6" stroke="#333" stroke-width="0.6" fill="none" />
<circle cx="938.8" cy="392.6" r="2.4" stroke="#333" stroke-width="0.7" fill="#fff" />
<path d="M945.6 392.6 A4.6 4.6 0 0 1 954.8 392.6" stroke="#333" stroke-width="0.6" fill="none" />
<circle cx="950.2" cy="392.6" r="2.4" stroke="#333" stroke-width="0.7" fill="#fff" />
<path d="M934.2 303.4 A4.6 4.6 0 0 1 943.4 303.4" stroke="#333" stroke-width="0.6" fill="none" />
<circle cx="938.8" cy="303.4" r="2.4" stroke="#333" stroke-width="0.7" fill="#fff" />
<path d="M945.6 303.4 A4.6 4.6 0 0 1 954.8 303.4" stroke="#333" stroke-width="0.6" fill="none" />
<circle cx="950.2" cy="303.4" r="2.4" stroke="#333" stroke-width="0.7" fill="#fff" />
<path d="M831.6 353.4 H860" stroke="#efb27e" stroke-width="0.9" fill="none" />
<path d="M834.6 351.6 L831 353.4 L834.6 355.2 Z M857 351.6 L860.6 353.4 L857 355.2 Z" stroke="#efb27e" stroke-width="0.6" fill="#efb27e" />
<path d="M788.4 486.3 V429 Q788.4 423.9 793.4 423.9 H898.3 Q903.3 423.9 903.3 429 V486.3 Z" stroke="#2a2a2a" stroke-width="1.25" fill="none" stroke-dasharray="3.4 2.2"/>
<path d="M804 431 L845.7 434.4 L887.4 431" stroke="#1c1c1c" stroke-width="1.9" fill="none" stroke-linejoin="round"/>
<path d="M804 431 V441.6 M887.4 431 V441.6" stroke="#1c1c1c" stroke-width="1.5" fill="none" />
<rect x="804" y="436.4" width="83.4" height="5.2" rx="0" stroke="#1c1c1c" stroke-width="1" fill="none" />
<rect x="806" y="437.4" width="11" height="3.4" rx="0" stroke="#1c1c1c" stroke-width="1.4" fill="none" />
<rect x="874.4" y="437.4" width="11" height="3.4" rx="0" stroke="#1c1c1c" stroke-width="1.4" fill="none" />
<rect x="821.4" y="437.4" width="48.6" height="3" rx="0" stroke="#333" stroke-width="0.7" fill="none" />
<rect x="842.4" y="436.8" width="6.6" height="4" rx="0" stroke="#1c1c1c" stroke-width="1.2" fill="#444" />
<rect x="820.2" y="446.8" width="50.7" height="15.6" rx="0" stroke="#333" stroke-width="0.8" fill="none" stroke-dasharray="1.4 1"/>
<rect x="821.8" y="449" width="47.5" height="11.2" rx="0" stroke="#333" stroke-width="0.8" fill="none" />
<rect x="800.8" y="469.6" width="89.4" height="7.7" rx="0" stroke="#1c1c1c" stroke-width="1" fill="none" />
<rect x="801.6" y="470.4" width="5" height="6.1" rx="0" stroke="#1c1c1c" stroke-width="1.5" fill="none" />
<rect x="884.4" y="470.4" width="5" height="6.1" rx="0" stroke="#1c1c1c" stroke-width="1.5" fill="none" />
<path d="M806.6 471.6 H884.4 M806.6 475.4 H884.4" stroke="#333" stroke-width="0.6" fill="none" />
<rect x="1189.6" y="327.3" width="22.2" height="42.2" rx="0" stroke="#333" stroke-width="0.8" fill="none" stroke-dasharray="1.4 1"/>
<path d="M707 421 Q760 426.5 800 423.6 M984 421 Q931 426.5 891 423.6" stroke="#444" stroke-width="0.6" fill="none" stroke-dasharray="1.2 0.8"/>
<path d="M808.6 396 Q812 398 814 403" stroke="#333" stroke-width="0.7" fill="none" />
<circle cx="822.7" cy="407.5" r="5.2" stroke="#333" stroke-width="0.8" fill="#fff" />
<path d="M817.5 407.5 H827.9" stroke="#333" stroke-width="0.6" fill="none" />
<text x="822.7" y="406.6" font-size="2.6" fill="#333" text-anchor="middle" >1</text>
<path d="M902.7 486.3 Q905 491 908 493" stroke="#333" stroke-width="0.7" fill="none" />
<circle cx="911.6" cy="496.7" r="5.4" stroke="#333" stroke-width="0.8" fill="#fff" />
<path d="M906.2 496.7 H917" stroke="#333" stroke-width="0.6" fill="none" />
<text x="911.6" y="495.8" font-size="2.6" fill="#333" text-anchor="middle" >2</text>
<path d="M545.4 193.7 L552.6 194.6 L566.6 227.4" stroke="#efb27e" stroke-width="0.8" fill="none" />
<path d="M566.6 227.4 l-2.4 -2 l1.8 -0.8 Z" stroke="#efb27e" stroke-width="0.5" fill="#efb27e" />
<rect x="512.1" y="190.6" width="33.3" height="6.2" rx="0" stroke="none" stroke-width="0" fill="#f8f27a" />
<text x="513.3" y="195" font-size="3.6" fill="#4a4400" textLength="31" lengthAdjust="spacingAndGlyphs" font-weight="700" >Provide wall types</text>
<path d="M577.6 324.6 Q566 322 541.8 303.2" stroke="#efb27e" stroke-width="0.8" fill="none" />
<path d="M541.8 303.2 l3 0.6 l-1.2 1.6 Z" stroke="#efb27e" stroke-width="0.5" fill="#efb27e" />
<rect x="577.6" y="321.6" width="25.4" height="5.6" rx="0" stroke="none" stroke-width="0" fill="#f8f27a" />
<text x="578.8" y="325.544" font-size="3.6" fill="#4a4400" textLength="22.6" lengthAdjust="spacingAndGlyphs" font-weight="700" >Provide RCP</text>
<path d="M1014.3 191.6 C1012 205 1022 222 1029.6 233" stroke="#efb27e" stroke-width="0.8" fill="none" />
<rect x="993.5" y="186.4" width="42.2" height="5.4" rx="0" stroke="none" stroke-width="0" fill="#f8f27a" />
<text x="994.7" y="190.192" font-size="3.6" fill="#4a4400" textLength="40" lengthAdjust="spacingAndGlyphs" font-weight="700" >Head and sill details?</text>
<path d="M1028.8 233.6 A2.26 2.26 0 0 1 1033.1 233.6 A2.26 2.26 0 0 1 1037.4 233.6 A2.26 2.26 0 0 1 1041.7 233.6 A2.26 2.26 0 0 1 1046.0 233.6 A2.14 2.14 0 0 1 1046.0 237.7 A2.14 2.14 0 0 1 1046.0 241.7 A2.14 2.14 0 0 1 1046.0 245.8 A2.14 2.14 0 0 1 1046.0 249.9 A2.14 2.14 0 0 1 1046.0 253.9 A2.14 2.14 0 0 1 1046.0 258.0 A2.26 2.26 0 0 1 1041.7 258.0 A2.26 2.26 0 0 1 1037.4 258.0 A2.26 2.26 0 0 1 1033.1 258.0 A2.26 2.26 0 0 1 1028.8 258.0 A2.14 2.14 0 0 1 1028.8 253.9 A2.14 2.14 0 0 1 1028.8 249.9 A2.14 2.14 0 0 1 1028.8 245.8 A2.14 2.14 0 0 1 1028.8 241.7 A2.14 2.14 0 0 1 1028.8 237.7 A2.14 2.14 0 0 1 1028.8 233.6 Z" stroke="#e0d040" stroke-width="0.8" fill="none" />
<path d="M1124.5 279.6 A2.48 2.48 0 0 1 1122.4 284.0 A2.48 2.48 0 0 1 1117.7 285.1 A2.48 2.48 0 0 1 1113.9 282.0 A2.48 2.48 0 0 1 1113.9 277.2 A2.48 2.48 0 0 1 1117.7 274.1 A2.48 2.48 0 0 1 1122.4 275.2 A2.48 2.48 0 0 1 1124.5 279.6 Z" stroke="#e0d040" stroke-width="0.8" fill="none" />
<path d="M1098.9 291 Q1108 290 1115 284" stroke="#efb27e" stroke-width="0.8" fill="none" />
<rect x="1065.9" y="286.8" width="33" height="9.8" rx="0" stroke="none" stroke-width="0" fill="#f8f27a" />
<text x="1067.1" y="290.668" font-size="3.6" fill="#4a4400" textLength="31" lengthAdjust="spacingAndGlyphs" font-weight="700" >Provide detail for</text>
<text x="1067.1" y="294.968" font-size="3.6" fill="#4a4400" textLength="29" lengthAdjust="spacingAndGlyphs" font-weight="700" >corner condition</text>
<path d="M521.5 421.9 Q529 420 534.3 411.8" stroke="#efb27e" stroke-width="0.8" fill="none" />
<path d="M534.3 411.8 l0.6 3 l-2.2 -1 Z" stroke="#efb27e" stroke-width="0.5" fill="#efb27e" />
<rect x="482" y="416.6" width="39.5" height="12" rx="0" stroke="none" stroke-width="0" fill="#f8f27a" />
<text x="484.4" y="421.304" font-size="3.6" fill="#4a4400" textLength="34" lengthAdjust="spacingAndGlyphs" font-weight="700" >Provide details on</text>
<text x="484.4" y="426.704" font-size="3.6" fill="#4a4400" textLength="34" lengthAdjust="spacingAndGlyphs" font-weight="700" >flooring transition</text>
<path d="M477.3 473.0 A2.83 2.83 0 0 1 474.9 478.0 A2.83 2.83 0 0 1 469.5 479.2 A2.83 2.83 0 0 1 465.1 475.8 A2.83 2.83 0 0 1 465.1 470.2 A2.83 2.83 0 0 1 469.5 466.8 A2.83 2.83 0 0 1 474.9 468.0 A2.83 2.83 0 0 1 477.3 473.0 Z" stroke="#e0d040" stroke-width="0.8" fill="none" />
<path d="M559.7 473.0 A2.83 2.83 0 0 1 557.3 478.0 A2.83 2.83 0 0 1 551.9 479.2 A2.83 2.83 0 0 1 547.5 475.8 A2.83 2.83 0 0 1 547.5 470.2 A2.83 2.83 0 0 1 551.9 466.8 A2.83 2.83 0 0 1 557.3 468.0 A2.83 2.83 0 0 1 559.7 473.0 Z" stroke="#e0d040" stroke-width="0.8" fill="none" />
<path d="M472 479.6 L510.5 498.6 L552 479.6 M510.5 498.6 V506" stroke="#efb27e" stroke-width="0.8" fill="none" />
<rect x="497.8" y="505.9" width="27.2" height="9.9" rx="0" stroke="none" stroke-width="0" fill="#f8f27a" />
<text x="499" y="509.806" font-size="3.6" fill="#4a4400" textLength="19" lengthAdjust="spacingAndGlyphs" font-weight="700" >Column wrap</text>
<text x="499" y="514.156" font-size="3.6" fill="#4a4400" textLength="10.6" lengthAdjust="spacingAndGlyphs" font-weight="700" >finish?</text>
<path d="M624.8 433.3 H649.7" stroke="#efb27e" stroke-width="0.9" fill="none" />
<path d="M627.8 431.6 L624.4 433.3 L627.8 435 Z M646.7 431.6 L650.1 433.3 L646.7 435 Z" stroke="#efb27e" stroke-width="0.6" fill="#efb27e" />
<path d="M1177.5 185.6 V246" stroke="#5a4fb0" stroke-width="0.9" fill="none" />
<rect x="1150.1" y="174.2" width="54" height="11.6" rx="0" stroke="none" stroke-width="0" fill="#c4f5f4" />
<text x="1151.7" y="178.752" font-size="3.5" fill="#2d6c88" textLength="47.6" lengthAdjust="spacingAndGlyphs" >What are power requirements</text>
<text x="1151.7" y="183.952" font-size="3.5" fill="#2d6c88" textLength="37" lengthAdjust="spacingAndGlyphs" >for Open Office areas?</text>
<path d="M1146.4 246.4 A2.12 2.12 0 0 1 1150.4 246.4 A2.12 2.12 0 0 1 1154.5 246.4 A2.12 2.12 0 0 1 1158.5 246.4 A2.12 2.12 0 0 1 1162.5 246.4 A2.12 2.12 0 0 1 1166.6 246.4 A2.12 2.12 0 0 1 1170.6 246.4 A2.12 2.12 0 0 1 1174.6 246.4 A2.12 2.12 0 0 1 1178.7 246.4 A2.12 2.12 0 0 1 1182.7 246.4 A2.12 2.12 0 0 1 1186.7 246.4 A2.12 2.12 0 0 1 1190.8 246.4 A2.12 2.12 0 0 1 1194.8 246.4 A2.20 2.20 0 0 1 1194.8 250.6 A2.20 2.20 0 0 1 1194.8 254.8 A2.20 2.20 0 0 1 1194.8 259.0 A2.20 2.20 0 0 1 1194.8 263.2 A2.20 2.20 0 0 1 1194.8 267.4 A2.12 2.12 0 0 1 1190.8 267.4 A2.12 2.12 0 0 1 1186.7 267.4 A2.12 2.12 0 0 1 1182.7 267.4 A2.12 2.12 0 0 1 1178.7 267.4 A2.12 2.12 0 0 1 1174.6 267.4 A2.12 2.12 0 0 1 1170.6 267.4 A2.12 2.12 0 0 1 1166.6 267.4 A2.12 2.12 0 0 1 1162.5 267.4 A2.12 2.12 0 0 1 1158.5 267.4 A2.12 2.12 0 0 1 1154.5 267.4 A2.12 2.12 0 0 1 1150.4 267.4 A2.12 2.12 0 0 1 1146.4 267.4 A2.20 2.20 0 0 1 1146.4 263.2 A2.20 2.20 0 0 1 1146.4 259.0 A2.20 2.20 0 0 1 1146.4 254.8 A2.20 2.20 0 0 1 1146.4 250.6 A2.20 2.20 0 0 1 1146.4 246.4 Z" stroke="#2b6fd0" stroke-width="0.8" fill="none" />
<path d="M813.3 292.7 H807.1 V301" stroke="#4a5cc4" stroke-width="0.8" fill="none" />
<rect x="813.3" y="288.1" width="39.5" height="9.3" rx="0" stroke="none" stroke-width="0" fill="#c4f5f4" />
<text x="814.7" y="291.778" font-size="3.4" fill="#2d6c88" textLength="30" lengthAdjust="spacingAndGlyphs" >Verify producing will</text>
<text x="814.7" y="295.828" font-size="3.4" fill="#2d6c88" textLength="23" lengthAdjust="spacingAndGlyphs" >fit in this chase</text>
<path d="M905.8 285 V296" stroke="#4a5cc4" stroke-width="0.8" fill="none" />
<rect x="887.1" y="276" width="37.4" height="9.2" rx="0" stroke="none" stroke-width="0" fill="#c4f5f4" />
<text x="888.3" y="279.64" font-size="3.4" fill="#2d6c88" textLength="35" lengthAdjust="spacingAndGlyphs" >Provide arranged plan</text>
<text x="888.3" y="283.64" font-size="3.4" fill="#2d6c88" textLength="26" lengthAdjust="spacingAndGlyphs" >for equip. layout</text>
<path d="M511.5 358.5 H519.8" stroke="#4a5cc4" stroke-width="0.8" fill="none" />
<rect x="519.8" y="353.3" width="37.4" height="10.1" rx="0" stroke="none" stroke-width="0" fill="#c4f5f4" />
<text x="521.8" y="357.282" font-size="3.4" fill="#2a9aa8" textLength="28" lengthAdjust="spacingAndGlyphs" >Is power required</text>
<text x="521.8" y="361.732" font-size="3.4" fill="#2a9aa8" textLength="9" lengthAdjust="spacingAndGlyphs" >here?</text>
<path d="M793.6 485.2 L802.9 501.9 H808.1" stroke="#4a5cc4" stroke-width="0.8" fill="none" />
<rect x="808.1" y="494.6" width="39.5" height="14.8" rx="0" stroke="none" stroke-width="0" fill="#c4f5f4" />
<text x="810.5" y="498.645" font-size="3.4" fill="#2d6c88" textLength="15" lengthAdjust="spacingAndGlyphs" >Provide AV</text>
<text x="810.5" y="503.179" font-size="3.4" fill="#2d6c88" textLength="26.6" lengthAdjust="spacingAndGlyphs" >requirements for</text>
<text x="810.5" y="507.712" font-size="3.4" fill="#2d6c88" textLength="23" lengthAdjust="spacingAndGlyphs" >meeting rooms</text>
<path d="M472.4 322.0 A2.02 2.02 0 0 1 476.2 322.0 A2.02 2.02 0 0 1 480.1 322.0 A2.02 2.02 0 0 1 483.9 322.0 A2.02 2.02 0 0 1 487.8 322.0 A2.02 2.02 0 0 1 491.6 322.0 A2.02 2.02 0 0 1 495.4 322.0 A2.02 2.02 0 0 1 499.3 322.0 A2.02 2.02 0 0 1 503.1 322.0 A2.02 2.02 0 0 1 507.0 322.0 A2.02 2.02 0 0 1 510.8 322.0 A2.06 2.06 0 0 1 510.8 325.9 A2.06 2.06 0 0 1 510.8 329.8 A2.06 2.06 0 0 1 510.8 333.8 A2.06 2.06 0 0 1 510.8 337.7 A2.06 2.06 0 0 1 510.8 341.6 A2.06 2.06 0 0 1 510.8 345.5 A2.06 2.06 0 0 1 510.8 349.5 A2.06 2.06 0 0 1 510.8 353.4 A2.06 2.06 0 0 1 510.8 357.3 A2.06 2.06 0 0 1 510.8 361.2 A2.06 2.06 0 0 1 510.8 365.2 A2.06 2.06 0 0 1 510.8 369.1 A2.06 2.06 0 0 1 510.8 373.0 A2.02 2.02 0 0 1 507.0 373.0 A2.02 2.02 0 0 1 503.1 373.0 A2.02 2.02 0 0 1 499.3 373.0 A2.02 2.02 0 0 1 495.4 373.0 A2.02 2.02 0 0 1 491.6 373.0 A2.02 2.02 0 0 1 487.8 373.0 A2.02 2.02 0 0 1 483.9 373.0 A2.02 2.02 0 0 1 480.1 373.0 A2.02 2.02 0 0 1 476.2 373.0 A2.02 2.02 0 0 1 472.4 373.0 A2.06 2.06 0 0 1 472.4 369.1 A2.06 2.06 0 0 1 472.4 365.2 A2.06 2.06 0 0 1 472.4 361.2 A2.06 2.06 0 0 1 472.4 357.3 A2.06 2.06 0 0 1 472.4 353.4 A2.06 2.06 0 0 1 472.4 349.5 A2.06 2.06 0 0 1 472.4 345.5 A2.06 2.06 0 0 1 472.4 341.6 A2.06 2.06 0 0 1 472.4 337.7 A2.06 2.06 0 0 1 472.4 333.8 A2.06 2.06 0 0 1 472.4 329.8 A2.06 2.06 0 0 1 472.4 325.9 A2.06 2.06 0 0 1 472.4 322.0 Z" stroke="#2b6fd0" stroke-width="0.8" fill="none" />
<rect x="480.3" y="326.2" width="22.9" height="42" rx="0" stroke="#1d4d55" stroke-width="0.8" fill="none" stroke-dasharray="1.4 1"/>
<path d="M756.0 444.4 A2.30 2.30 0 0 1 760.4 444.4 A2.30 2.30 0 0 1 764.8 444.4 A2.30 2.30 0 0 1 769.1 444.4 A2.30 2.30 0 0 1 773.5 444.4 A2.30 2.30 0 0 1 777.9 444.4 A2.30 2.30 0 0 1 782.3 444.4 A2.30 2.30 0 0 1 786.6 444.4 A2.30 2.30 0 0 1 791.0 444.4 A2.30 2.30 0 0 1 795.4 444.4 A2.39 2.39 0 0 1 795.4 449.0 A2.39 2.39 0 0 1 795.4 453.5 A2.39 2.39 0 0 1 795.4 458.1 A2.39 2.39 0 0 1 795.4 462.6 A2.39 2.39 0 0 1 795.4 467.2 A2.39 2.39 0 0 1 795.4 471.7 A2.39 2.39 0 0 1 795.4 476.3 A2.39 2.39 0 0 1 795.4 480.8 A2.39 2.39 0 0 1 795.4 485.4 A2.30 2.30 0 0 1 791.0 485.4 A2.30 2.30 0 0 1 786.6 485.4 A2.30 2.30 0 0 1 782.3 485.4 A2.30 2.30 0 0 1 777.9 485.4 A2.30 2.30 0 0 1 773.5 485.4 A2.30 2.30 0 0 1 769.1 485.4 A2.30 2.30 0 0 1 764.8 485.4 A2.30 2.30 0 0 1 760.4 485.4 A2.30 2.30 0 0 1 756.0 485.4 A2.39 2.39 0 0 1 756.0 480.8 A2.39 2.39 0 0 1 756.0 476.3 A2.39 2.39 0 0 1 756.0 471.7 A2.39 2.39 0 0 1 756.0 467.2 A2.39 2.39 0 0 1 756.0 462.6 A2.39 2.39 0 0 1 756.0 458.1 A2.39 2.39 0 0 1 756.0 453.5 A2.39 2.39 0 0 1 756.0 449.0 A2.39 2.39 0 0 1 756.0 444.4 Z" stroke="#2b6fd0" stroke-width="0.8" fill="none" />
<path d="M603.3 281.4 A3.37 3.37 0 0 1 600.0 287.1 A3.37 3.37 0 0 1 593.4 287.1 A3.37 3.37 0 0 1 590.1 281.4 A3.37 3.37 0 0 1 593.4 275.7 A3.37 3.37 0 0 1 600.0 275.7 A3.37 3.37 0 0 1 603.3 281.4 Z" stroke="#e0474c" stroke-width="0.8" fill="none" />
<path d="M602.4 285.6 Q606 290 609.6 290.4" stroke="#e0474c" stroke-width="0.7" fill="none" />
<text x="610.2" y="289.6" font-size="3.6" fill="#e0474c" textLength="12" lengthAdjust="spacingAndGlyphs" >Provide</text>
<text x="610.2" y="294.8" font-size="3.6" fill="#e0474c" textLength="23.6" lengthAdjust="spacingAndGlyphs" >mullion detail</text>
<text x="733.7" y="278.8" font-size="3.6" fill="#e0474c" textLength="33" lengthAdjust="spacingAndGlyphs" >Stair doors to be fire</text>
<text x="733.7" y="284" font-size="3.6" fill="#e0474c" textLength="40" lengthAdjust="spacingAndGlyphs" >rated assemblies, typ</text>
<path d="M755.1 285.6 V296" stroke="#e0474c" stroke-width="0.7" fill="none" />
<path d="M735.0 297.0 A2.62 2.62 0 0 1 740.0 297.0 A2.62 2.62 0 0 1 745.0 297.0 A2.62 2.62 0 0 1 750.0 297.0 A2.62 2.62 0 0 1 750.0 302.0 A2.62 2.62 0 0 1 750.0 307.0 A2.62 2.62 0 0 1 750.0 312.0 A2.62 2.62 0 0 1 745.0 312.0 A2.62 2.62 0 0 1 740.0 312.0 A2.62 2.62 0 0 1 735.0 312.0 A2.62 2.62 0 0 1 735.0 307.0 A2.62 2.62 0 0 1 735.0 302.0 A2.62 2.62 0 0 1 735.0 297.0 Z" stroke="#e0474c" stroke-width="0.7" fill="none" />
<path d="M808.1 372.1 L829.6 399" stroke="#e0474c" stroke-width="0.7" fill="none" />
<text x="831.4" y="399.2" font-size="3.6" fill="#e0474c" textLength="27" lengthAdjust="spacingAndGlyphs" >Verify 60in clr</text>
<text x="831.4" y="404.4" font-size="3.6" fill="#e0474c" textLength="28" lengthAdjust="spacingAndGlyphs" >radius for ADA</text>
<text x="1054.4" y="410.2" font-size="3.6" fill="#e0474c" textLength="37.8" lengthAdjust="spacingAndGlyphs" >Emergency Egress?</text>
<path d="M1220 223.4 L1160.4 300 Q1157 303.6 1157 308 V404.8 H968" stroke="#ef9c9e" stroke-width="0.7" fill="none" stroke-dasharray="1 1.1"/>
<path d="M1159.4 308 V402.6" stroke="#ef9c9e" stroke-width="0.6" fill="none" stroke-dasharray="1 1.1"/>
<text x="1148.8" y="451.6" font-size="3.6" fill="#e0474c" textLength="52" lengthAdjust="spacingAndGlyphs" >See furniture plan for Open</text>
<text x="1148.8" y="456.8" font-size="3.6" fill="#e0474c" textLength="33.6" lengthAdjust="spacingAndGlyphs" >Office area layout</text>
<path d="M522.9 295.6 L528.9 301.6 L522.9 307.6 L516.9 301.6 Z" stroke="#e0474c" stroke-width="0.8" fill="#f5b7b5" />
<path d="M522.9 297.20000000000005 L527.3 301.6 L522.9 306.0 L518.5 301.6 Z" stroke="#e0474c" stroke-width="0.5" fill="none" />
<text x="522.9" y="302.7" font-size="2.4" fill="#e0474c" text-anchor="middle" >RI-1</text>
<path d="M522.9 388.2 L528.9 394.2 L522.9 400.2 L516.9 394.2 Z" stroke="#e0474c" stroke-width="0.8" fill="#f5b7b5" />
<path d="M522.9 389.8 L527.3 394.2 L522.9 398.59999999999997 L518.5 394.2 Z" stroke="#e0474c" stroke-width="0.5" fill="none" />
<text x="522.9" y="395.3" font-size="2.4" fill="#e0474c" text-anchor="middle" >RI-1</text>
<path d="M1168.1 296.6 L1174.1 302.6 L1168.1 308.6 L1162.1 302.6 Z" stroke="#e0474c" stroke-width="0.8" fill="#f5b7b5" />
<path d="M1168.1 298.20000000000005 L1172.5 302.6 L1168.1 307.0 L1163.6999999999998 302.6 Z" stroke="#e0474c" stroke-width="0.5" fill="none" />
<text x="1168.1" y="303.7" font-size="2.4" fill="#e0474c" text-anchor="middle" >RI-1</text>
<path d="M1167.1 388.2 L1173.1 394.2 L1167.1 400.2 L1161.1 394.2 Z" stroke="#e0474c" stroke-width="0.8" fill="#f5b7b5" />
<path d="M1167.1 389.8 L1171.5 394.2 L1167.1 398.59999999999997 L1162.6999999999998 394.2 Z" stroke="#e0474c" stroke-width="0.5" fill="none" />
<text x="1167.1" y="395.3" font-size="2.4" fill="#e0474c" text-anchor="middle" >RI-1</text>
<text x="499" y="252.3" font-size="3.5" fill="#333" textLength="29" lengthAdjust="spacingAndGlyphs" font-weight="700" >OPEN OFFICE 209</text>
<text x="571.8" y="231.5" font-size="3.5" fill="#333" textLength="20.3" lengthAdjust="spacingAndGlyphs" font-weight="700" >MEETING 231</text>
<text x="599.2" y="231.5" font-size="3.5" fill="#333" textLength="20.3" lengthAdjust="spacingAndGlyphs" font-weight="700" >MEETING 203</text>
<text x="571.8" y="265.2" font-size="3.5" fill="#333" textLength="20.3" lengthAdjust="spacingAndGlyphs" font-weight="700" >MEETING 232</text>
<text x="599.2" y="265.2" font-size="3.5" fill="#333" textLength="20.3" lengthAdjust="spacingAndGlyphs" font-weight="700" >MEETING 204</text>
<text x="669.5" y="232.5" font-size="3.5" fill="#333" textLength="19.7" lengthAdjust="spacingAndGlyphs" font-weight="700" >OFFICE 201</text>
<text x="669.5" y="262.7" font-size="3.5" fill="#333" textLength="19.7" lengthAdjust="spacingAndGlyphs" font-weight="700" >OFFICE 206</text>
<text x="479.3" y="306.3" font-size="3.5" fill="#333" textLength="21.4" lengthAdjust="spacingAndGlyphs" font-weight="700" >MEETING 207</text>
<text x="742.6" y="245.4" font-size="3.5" fill="#333" textLength="30" lengthAdjust="spacingAndGlyphs" font-weight="700" >CONFERENCE 207</text>
<text x="813" y="246.4" font-size="3.5" fill="#333" textLength="21.6" lengthAdjust="spacingAndGlyphs" font-weight="700" >MEETING 208</text>
<text x="855.4" y="246.4" font-size="3.5" fill="#333" textLength="21.6" lengthAdjust="spacingAndGlyphs" font-weight="700" >MEETING 209</text>
<text x="897" y="246.4" font-size="3.5" fill="#333" textLength="21.6" lengthAdjust="spacingAndGlyphs" font-weight="700" >MEETING 210</text>
<text x="942.4" y="242.9" font-size="3.5" fill="#333" textLength="28.6" lengthAdjust="spacingAndGlyphs" font-weight="700" >CONFERENCE 211</text>
<text x="833" y="284.9" font-size="3.5" fill="#333" textLength="26.6" lengthAdjust="spacingAndGlyphs" font-weight="700" >RECEPTION 200</text>
<text x="1001.3" y="232.8" font-size="3.5" fill="#333" textLength="19" lengthAdjust="spacingAndGlyphs" font-weight="700" >OFFICE 212</text>
<text x="1001.3" y="263" font-size="3.5" fill="#333" textLength="19" lengthAdjust="spacingAndGlyphs" font-weight="700" >OFFICE 213</text>
<text x="1071.3" y="233.8" font-size="3.5" fill="#333" textLength="20.4" lengthAdjust="spacingAndGlyphs" font-weight="700" >MEETING 214</text>
<text x="1098.8" y="233.8" font-size="3.5" fill="#333" textLength="20.4" lengthAdjust="spacingAndGlyphs" font-weight="700" >MEETING 216</text>
<text x="1071.3" y="267.6" font-size="3.5" fill="#333" textLength="20.4" lengthAdjust="spacingAndGlyphs" font-weight="700" >MEETING 215</text>
<text x="1098.8" y="267.6" font-size="3.5" fill="#333" textLength="20.4" lengthAdjust="spacingAndGlyphs" font-weight="700" >MEETING 217</text>
<text x="1156.2" y="259.6" font-size="3.5" fill="#333" textLength="29" lengthAdjust="spacingAndGlyphs" font-weight="700" >OPEN OFFICE 218</text>
<text x="1190" y="307.6" font-size="3.5" fill="#333" textLength="21.4" lengthAdjust="spacingAndGlyphs" font-weight="700" >MEETING 234</text>
<text x="476.4" y="349.4" font-size="3.5" fill="#333" textLength="30" lengthAdjust="spacingAndGlyphs" font-weight="700" >CONFERENCE 245</text>
<text x="479.3" y="394.2" font-size="3.5" fill="#333" textLength="21.4" lengthAdjust="spacingAndGlyphs" font-weight="700" >MEETING 249</text>
<text x="587.4" y="348.2" font-size="3.5" fill="#333" textLength="29.7" lengthAdjust="spacingAndGlyphs" font-weight="700" >OPEN OFFICE 246</text>
<text x="690" y="330.4" font-size="3.5" fill="#333" textLength="19.7" lengthAdjust="spacingAndGlyphs" font-weight="700" >OFFICE 248</text>
<text x="692.8" y="371.8" font-size="3.5" fill="#333" textLength="15.6" lengthAdjust="spacingAndGlyphs" font-weight="700" >COPY 260</text>
<text x="498" y="443.9" font-size="3.5" fill="#333" textLength="29" lengthAdjust="spacingAndGlyphs" font-weight="700" >OPEN OFFICE 244</text>
<text x="585.6" y="430.8" font-size="3.5" fill="#333" textLength="19.8" lengthAdjust="spacingAndGlyphs" font-weight="700" >OFFICE 242</text>
<text x="585.6" y="461" font-size="3.5" fill="#333" textLength="19.8" lengthAdjust="spacingAndGlyphs" font-weight="700" >OFFICE 243</text>
<text x="655.6" y="435.7" font-size="3.5" fill="#333" textLength="19" lengthAdjust="spacingAndGlyphs" font-weight="700" >OFFICE 249</text>
<text x="683.4" y="435.7" font-size="3.5" fill="#333" textLength="19" lengthAdjust="spacingAndGlyphs" font-weight="700" >OFFICE 255</text>
<text x="655.6" y="465.7" font-size="3.5" fill="#333" textLength="19" lengthAdjust="spacingAndGlyphs" font-weight="700" >OFFICE 265</text>
<text x="683.4" y="465.7" font-size="3.5" fill="#333" textLength="19" lengthAdjust="spacingAndGlyphs" font-weight="700" >OFFICE 259</text>
<text x="740.2" y="439.8" font-size="3.5" fill="#333" textLength="17" lengthAdjust="spacingAndGlyphs" font-weight="700" >OFFICE 236</text>
<text x="765.4" y="439.8" font-size="3.5" fill="#333" textLength="20.4" lengthAdjust="spacingAndGlyphs" font-weight="700" >MEETING 234</text>
<text x="740.2" y="464.6" font-size="3.5" fill="#333" textLength="17" lengthAdjust="spacingAndGlyphs" font-weight="700" >OFFICE 237</text>
<text x="765.4" y="464.6" font-size="3.5" fill="#333" textLength="20.4" lengthAdjust="spacingAndGlyphs" font-weight="700" >MEETING 235</text>
<text x="831.4" y="456.2" font-size="3.5" fill="#333" textLength="30" lengthAdjust="spacingAndGlyphs" font-weight="700" >BREAK ROOM 251</text>
<text x="905.6" y="440.2" font-size="3.5" fill="#333" textLength="20.4" lengthAdjust="spacingAndGlyphs" font-weight="700" >MEETING 231</text>
<text x="933" y="440.2" font-size="3.5" fill="#333" textLength="18" lengthAdjust="spacingAndGlyphs" font-weight="700" >OFFICE 229</text>
<text x="905.6" y="468.4" font-size="3.5" fill="#333" textLength="20.4" lengthAdjust="spacingAndGlyphs" font-weight="700" >MEETING 232</text>
<text x="933" y="468.4" font-size="3.5" fill="#333" textLength="18" lengthAdjust="spacingAndGlyphs" font-weight="700" >OFFICE 230</text>
<text x="988.3" y="435.9" font-size="3.5" fill="#333" textLength="19" lengthAdjust="spacingAndGlyphs" font-weight="700" >OFFICE 227</text>
<text x="1017" y="435.9" font-size="3.5" fill="#333" textLength="19" lengthAdjust="spacingAndGlyphs" font-weight="700" >OFFICE 226</text>
<text x="987.5" y="466.6" font-size="3.5" fill="#333" textLength="19" lengthAdjust="spacingAndGlyphs" font-weight="700" >OFFICE 228</text>
<text x="1017" y="466.6" font-size="3.5" fill="#333" textLength="19" lengthAdjust="spacingAndGlyphs" font-weight="700" >OFFICE 225</text>
<text x="1091" y="432.4" font-size="3.5" fill="#333" textLength="19.6" lengthAdjust="spacingAndGlyphs" font-weight="700" >OFFICE 223</text>
<text x="1091" y="463" font-size="3.5" fill="#333" textLength="19.6" lengthAdjust="spacingAndGlyphs" font-weight="700" >OFFICE 224</text>
<text x="1160.5" y="440.7" font-size="3.5" fill="#333" textLength="29.5" lengthAdjust="spacingAndGlyphs" font-weight="700" >OPEN OFFICE 222</text>
<text x="1062.7" y="346.6" font-size="3.5" fill="#333" textLength="29.7" lengthAdjust="spacingAndGlyphs" font-weight="700" >OPEN OFFICE 250</text>
<text x="980" y="329.4" font-size="3.5" fill="#333" textLength="17.6" lengthAdjust="spacingAndGlyphs" font-weight="700" >OFFICE 261</text>
<text x="980" y="367.4" font-size="3.5" fill="#333" textLength="16.6" lengthAdjust="spacingAndGlyphs" font-weight="700" >COPY 262</text>
<text x="1185.8" y="350.6" font-size="3.5" fill="#333" textLength="30.6" lengthAdjust="spacingAndGlyphs" font-weight="700" >CONFERENCE 240</text>
<text x="1190" y="391.6" font-size="3.5" fill="#333" textLength="21.4" lengthAdjust="spacingAndGlyphs" font-weight="700" >MEETING 239</text>
<text x="727.2" y="319.4" font-size="3.5" fill="#333" textLength="15.8" lengthAdjust="spacingAndGlyphs" font-weight="700" >STAIR 251</text>
<text x="751.8" y="316.4" font-size="3.5" fill="#333" textLength="21" lengthAdjust="spacingAndGlyphs" font-weight="700" >ELECTRICAL</text>
<text x="762.2" y="320.8" font-size="3.5" fill="#333" textLength="5.4" lengthAdjust="spacingAndGlyphs" font-weight="700" >253</text>
<text x="758" y="340.7" font-size="3.5" fill="#333" textLength="25" lengthAdjust="spacingAndGlyphs" font-weight="700" >STORAGE 255A</text>
<text x="748.6" y="351.4" font-size="3.5" fill="#333" textLength="25" lengthAdjust="spacingAndGlyphs" font-weight="700" >STORAGE 256A</text>
<text x="760.4" y="382.2" font-size="3.5" fill="#333" textLength="25.8" lengthAdjust="spacingAndGlyphs" font-weight="700" >WOMEN'S RR 254</text>
<text x="837" y="343.2" font-size="3.5" fill="#333" textLength="18.7" lengthAdjust="spacingAndGlyphs" font-weight="700" >LOBBY 200</text>
<text x="896" y="309.4" font-size="3.5" fill="#333" textLength="20.4" lengthAdjust="spacingAndGlyphs" font-weight="700" >SERVER 257</text>
<text x="904" y="353" font-size="3.5" fill="#333" textLength="25" lengthAdjust="spacingAndGlyphs" font-weight="700" >STORAGE 258A</text>
<text x="905.6" y="382.2" font-size="3.5" fill="#333" textLength="20.6" lengthAdjust="spacingAndGlyphs" font-weight="700" >MEN'S RR 258</text>
<text x="947.4" y="382.4" font-size="3.5" fill="#333" textLength="16.6" lengthAdjust="spacingAndGlyphs" font-weight="700" >STAIR 259</text>
</g>
</svg>
<svg width="1395" height="772" viewBox="0 0 1395 772" class="icons">
<path d="M1261.5 9.2 H1278" stroke="#f2f2f2" stroke-width="1.4" fill="none" />
<rect x="1311" y="5.5" width="11.5" height="12" rx="0" stroke="#f2f2f2" stroke-width="1.3" fill="none" />
<path d="M1315 5.5 V2 H1327 V14 H1322.5" stroke="#f2f2f2" stroke-width="1.3" fill="none" />
<path d="M1360.5 2 L1376.5 18 M1376.5 2 L1360.5 18" stroke="#f2f2f2" stroke-width="1.5" fill="none" />
<path d="M12.8 31 H22.4 L27.4 36 V50 H12.8 Z M22.4 31 V36 H27.4" stroke="#f2f2f2" stroke-width="1.3" fill="none" stroke-linejoin="round"/>
<rect x="17" y="41.5" width="6" height="6" rx="0" stroke="#f2f2f2" stroke-width="1.1" fill="none" />
<rect x="19.2" y="43.7" width="1.6" height="1.6" rx="0" stroke="#f2f2f2" stroke-width="1" fill="#f2f2f2" />
<path d="M39.4 38.5 L43.7 43.1 L48 38.5" stroke="#f2f2f2" stroke-width="1.5" fill="none" stroke-linecap="round" stroke-linejoin="round"/>
<path d="M391 32.2 H399.5 L404.6 37.3 V45 M400.5 50 H391 V32.2 M399.5 32.2 V37.3 H404.6" stroke="#f2f2f2" stroke-width="1.3" fill="none" stroke-linejoin="round"/>
<path d="M404.8 45.4 V51.4 M401.8 48.4 H407.8" stroke="#d7c23a" stroke-width="1.3" fill="none" />
<rect x="10.6" y="70.6" width="14.8" height="18.6" rx="0" stroke="#f2f2f2" stroke-width="1.4" fill="none" />
<path d="M10.6 79.8 H25.4" stroke="#f2f2f2" stroke-width="1.4" fill="none" />
<path d="M15.2 74 V75.3 H20.8 V74 M15.2 83 V84.3 H20.8 V83" stroke="#f2f2f2" stroke-width="1.1" fill="none" />
<rect x="8.6" y="108.8" width="7.8" height="7.4" rx="0" stroke="#f2f2f2" stroke-width="1.3" fill="none" />
<rect x="19.7" y="108.8" width="7.8" height="7.4" rx="0" stroke="#f2f2f2" stroke-width="1.3" fill="none" />
<rect x="8.6" y="119.6" width="7.8" height="7.4" rx="0" stroke="#f2f2f2" stroke-width="1.3" fill="none" />
<rect x="19.7" y="119.6" width="7.8" height="7.4" rx="0" stroke="#f2f2f2" stroke-width="1.3" fill="none" />
<rect x="10.7" y="146.4" width="14.6" height="18.2" rx="0" stroke="#f2f2f2" stroke-width="1.4" fill="none" />
<path d="M13.6 146.4 V157.4 L16.4 154.8 L19.2 157.4 V146.4" stroke="#f2f2f2" stroke-width="1.3" fill="none" />
<path d="M17.7 184 L26.8 190 L17.7 196 L8.6 190 Z" stroke="#f2f2f2" stroke-width="1.4" fill="none" stroke-linejoin="round"/>
<path d="M11.6 194.3 L8.6 196.6 L17.7 202.6 L26.8 196.6 L23.8 194.3" stroke="#f2f2f2" stroke-width="1.4" fill="none" stroke-linejoin="round"/>
<rect x="8.6" y="226.8" width="18.8" height="11.2" rx="1.5" stroke="#f2f2f2" stroke-width="1.4" fill="none" />
<path d="M13.4 226.8 V224.2 Q13.4 222.6 15 222.6 H21 Q22.6 222.6 22.6 224.2 V226.8" stroke="#f2f2f2" stroke-width="1.4" fill="none" />
<path d="M8.6 232.6 H27.4 M14.2 231.4 V233.8 M21.8 231.4 V233.8" stroke="#f2f2f2" stroke-width="1.2" fill="none" />
<path d="M19.9 259.4 H27.6 V272.3 H21 M17 272.3 V278.3 H8.6 V259.4 H19.9 V263.6 M8.6 267.4 H13.6 M16.4 267.4 H19.9 V266 M17 272.3 H15" stroke="#f2f2f2" stroke-width="1.4" fill="none" stroke-linejoin="miter"/>
<rect x="7.8" y="301.8" width="19.8" height="9.4" rx="0" stroke="#f2f2f2" stroke-width="1.4" fill="none" />
<path d="M10.4 301.8 V306.4" stroke="#f2f2f2" stroke-width="1.1" fill="none" />
<path d="M13.5 301.8 V304.8" stroke="#f2f2f2" stroke-width="1.1" fill="none" />
<path d="M16.7 301.8 V306.4" stroke="#f2f2f2" stroke-width="1.1" fill="none" />
<path d="M19.9 301.8 V304.8" stroke="#f2f2f2" stroke-width="1.1" fill="none" />
<path d="M23.1 301.8 V306.4" stroke="#f2f2f2" stroke-width="1.1" fill="none" />
<path d="M25.6 301.8 V304.8" stroke="#f2f2f2" stroke-width="1.1" fill="none" />
<path d="M8.2 353.4 H28" stroke="#f2f2f2" stroke-width="1.4" fill="none" />
<path d="M11.6 350.6 L13.6 342.8 L19 338.6 L24.2 343.6 L20.2 349 L11.6 350.6 L16 346.2" stroke="#f2f2f2" stroke-width="1.2" fill="none" stroke-linejoin="round"/>
<circle cx="16.4" cy="345.8" r="0.9" stroke="#f2f2f2" stroke-width="0.8" fill="#f2f2f2"/>
<path d="M19 338.6 L20.8 335 M24.2 343.6 L27.4 341.6 M18.6 335.6 L22 337.4" stroke="#f2f2f2" stroke-width="1.2" fill="none" />
<path d="M10.8 372.8 H25.2 L27.8 384.8 H8.2 Z" stroke="#f2f2f2" stroke-width="1.4" fill="none" stroke-linejoin="round"/>
<path d="M13.6 375.6 H22.6 L23.8 381.8 H12.6 Z" stroke="#f2f2f2" stroke-width="1.2" fill="none" />
<path d="M20.2 375.6 L21.4 381.8" stroke="#f2f2f2" stroke-width="1.0" fill="none" />
<path d="M8.2 386.6 H27.8 M8.2 388.6 H27.8 M8.2 390.6 H27.8" stroke="#f2f2f2" stroke-width="1.1" fill="none" />
<circle cx="15.6" cy="417.2" r="6.8" stroke="#f2f2f2" stroke-width="1.5" fill="none"/>
<path d="M20.6 422.2 L27.4 429.2" stroke="#f2f2f2" stroke-width="1.6" fill="none" />
<path d="M8.4 453.8 L22.6 448.2 L27.7 452.8 V461.8 L22 466.8 L8.4 463.4 Z" stroke="#c9e6fb" stroke-width="1.4" fill="none" stroke-linejoin="round"/>
<path d="M11.4 464.2 V459.4 H16 V465.2" stroke="#c9e6fb" stroke-width="1.2" fill="none" />
<path d="M24.8 493.2 L27.3 493.6 L27.3 496.8 L24.8 497.2 L24.1 498.8 L25.6 500.8 L23.3 503.1 L21.3 501.6 L19.7 502.3 L19.3 504.8 L16.1 504.8 L15.7 502.3 L14.1 501.6 L12.1 503.1 L9.8 500.8 L11.3 498.8 L10.6 497.2 L8.1 496.8 L8.1 493.6 L10.6 493.2 L11.3 491.6 L9.8 489.6 L12.1 487.3 L14.1 488.8 L15.7 488.1 L16.1 485.6 L19.3 485.6 L19.7 488.1 L21.3 488.8 L23.3 487.3 L25.6 489.6 L24.1 491.6 Z" stroke="#f2f2f2" stroke-width="1.3" fill="none" stroke-linejoin="round"/>
<circle cx="17.7" cy="495.2" r="4.6" stroke="#f2f2f2" stroke-width="1.4" fill="none"/>
<path d="M103.5 77.4 L107.8 82.2 L112.1 77.4" stroke="#f2f2f2" stroke-width="1.4" fill="none" stroke-linecap="round" stroke-linejoin="round"/>
<rect x="127.6" y="71.6" width="19" height="16.2" rx="0" stroke="#f2f2f2" stroke-width="1.4" fill="none" />
<path d="M131.4 76 H137 M139.5 76 H140.8 M131.4 79.8 H142.6 M133.5 83.6 H140 M130.6 83.6 H131.6" stroke="#f2f2f2" stroke-width="1.3" fill="none" />
<path d="M166.5 82 V70.2 H183.3 V82" stroke="#d3ecf8" stroke-width="1.4" fill="none" />
<path d="M165.8 82.9 H184" stroke="#d3ecf8" stroke-width="2.0" fill="none" />
<path d="M166.9 84 V89 M182.9 84 V89 M164.4 89.2 H169.2 M180.6 89.2 H185.4 M168.2 80 H171.6" stroke="#d3ecf8" stroke-width="1.4" fill="none" />
<path d="M354.8 88.8 L360.6 83.2 M367.8 76.2 L373.8 70.2" stroke="#f2f2f2" stroke-width="1.4" fill="none" />
<g transform="rotate(-44 364.2 79.7)"><rect x="358.4" y="75.7" width="11.6" height="8" rx="4" stroke="#f2f2f2" stroke-width="1.3" fill="none"/><path d="M364.2 75.7 V83.7" stroke="#f2f2f2" stroke-width="1.2"/></g>
<circle cx="371.7" cy="87.6" r="2.5" stroke="none" stroke-width="0" fill="#c3d76a"/>
<path d="M322.6 110.2 H328 V114.4 M328 121 V125.6 H322.6" stroke="#f2f2f2" stroke-width="1.3" fill="none" />
<path d="M316.2 110.2 L322.6 112 V127 L316.2 125.4 Z M316.2 110.2 H322.6" stroke="#f2f2f2" stroke-width="1.3" fill="none" stroke-linejoin="round"/>
<path d="M324.6 117.7 H334 M330.8 114.2 L334.4 117.7 L330.8 121.2" stroke="#f2f2f2" stroke-width="1.3" fill="none" />
<path d="M365 108.6 H356.4 V120.4 M373 114.5 V120.4" stroke="#6c6c6c" stroke-width="1.4" fill="none" />
<path d="M355.6 121.2 H373.8" stroke="#6c6c6c" stroke-width="2.0" fill="none" />
<path d="M356.8 122.2 V127.4 M372.6 122.2 V127.4 M354.4 127.6 H359.2 M370.2 127.6 H375 M358.4 118.4 H361.6" stroke="#6c6c6c" stroke-width="1.4" fill="none" />
<path d="M365.4 111.6 L367.4 113.6 L372.4 107.8" stroke="#2f5f7c" stroke-width="1.4" fill="none" />
<path d="M365.3 147.8 L369 151.8 L372.7 147.8" stroke="#f2f2f2" stroke-width="1.5" fill="none" stroke-linecap="round" stroke-linejoin="round"/>
<path d="M49.6 188.4 L54 193.2 L58.4 188.4" stroke="#f2f2f2" stroke-width="1.5" fill="none" stroke-linecap="round" stroke-linejoin="round"/>
<path d="M49.6 317.6 L54 322.4 L58.4 317.6" stroke="#f2f2f2" stroke-width="1.5" fill="none" stroke-linecap="round" stroke-linejoin="round"/>
<path d="M372.25 249.7 L375.5 246.3 L378.75 249.7" stroke="#555" stroke-width="1.4" fill="none" stroke-linecap="round" stroke-linejoin="round"/>
<path d="M372.25 289.9 L375.5 293.3 L378.75 289.9" stroke="#555" stroke-width="1.4" fill="none" stroke-linecap="round" stroke-linejoin="round"/>
<path d="M51.3 276.3 A3 3.1 0 1 1 54.7 276.3 C57.6 276.8 58.7 278 58.7 280 V282.8 C58.7 284.4 56.5 284.6 56.3 286 L56.1 289.9 H49.9 L49.7 286 C49.5 284.6 47.3 284.4 47.3 282.8 V280 C47.3 278 48.4 276.8 51.3 276.3 Z" stroke="#f2f2f2" stroke-width="1.25" fill="none" stroke-linejoin="round"/>
<text x="350.4" y="318.5" font-size="11.5" font-weight="700" fill="#f2f2f2">A</text><text x="350.8" y="329.8" font-size="11.5" font-weight="700" fill="#f2f2f2">Z</text>
<path d="M362.4 317.2 L365.4 314 L368.4 317.2" stroke="#f2f2f2" stroke-width="1.2" fill="none" stroke-linecap="round" stroke-linejoin="round"/>
<path d="M362.4 322 L365.4 325.2 L368.4 322" stroke="#f2f2f2" stroke-width="1.2" fill="none" stroke-linecap="round" stroke-linejoin="round"/>
<path d="M45.8 343 H55.4 L60.4 348 V361.4 H45.8 Z M55.4 343 V348 H60.4" stroke="#f2f2f2" stroke-width="1.3" fill="none" stroke-linejoin="round"/>
<rect x="50" y="352.8" width="5.6" height="5.6" rx="0" stroke="#f2f2f2" stroke-width="1.1" fill="none" />
<rect x="52" y="354.8" width="1.6" height="1.6" rx="0" stroke="#f2f2f2" stroke-width="1" fill="#f2f2f2" />
<clipPath id="logclip"><rect x="38" y="424.7" width="330" height="268.9"/></clipPath><g clip-path="url(#logclip)">
<path d="M66.6 432.4 A3 3.1 0 1 1 70 432.4 C72.9 432.9 74 434.1 74 436.1 V438.9 C74 440.5 71.8 440.7 71.6 442.1 L71.4 446 H65.2 L65 442.1 C64.8 440.7 62.6 440.5 62.6 438.9 V436.1 C62.6 434.1 63.7 432.9 66.6 432.4 Z" stroke="#f2f2f2" stroke-width="1.25" fill="none" stroke-linejoin="round"/>
<path d="M66.6 458.6 A3 3.1 0 1 1 70 458.6 C72.9 459.1 74 460.3 74 462.3 V465.1 C74 466.7 71.8 466.9 71.6 468.3 L71.4 472.2 H65.2 L65 468.3 C64.8 466.9 62.6 466.7 62.6 465.1 V462.3 C62.6 460.3 63.7 459.1 66.6 458.6 Z" stroke="#f2f2f2" stroke-width="1.25" fill="none" stroke-linejoin="round"/>
<path d="M66.6 484.8 A3 3.1 0 1 1 70 484.8 C72.9 485.3 74 486.5 74 488.5 V491.3 C74 492.9 71.8 493.1 71.6 494.5 L71.4 498.4 H65.2 L65 494.5 C64.8 493.1 62.6 492.9 62.6 491.3 V488.5 C62.6 486.5 63.7 485.3 66.6 484.8 Z" stroke="#f2f2f2" stroke-width="1.25" fill="none" stroke-linejoin="round"/>
<path d="M66.6 511 A3 3.1 0 1 1 70 511 C72.9 511.5 74 512.7 74 514.7 V517.5 C74 519.1 71.8 519.3 71.6 520.7 L71.4 524.6 H65.2 L65 520.7 C64.8 519.3 62.6 519.1 62.6 517.5 V514.7 C62.6 512.7 63.7 511.5 66.6 511 Z" stroke="#f2f2f2" stroke-width="1.25" fill="none" stroke-linejoin="round"/>
<path d="M66.6 537.2 A3 3.1 0 1 1 70 537.2 C72.9 537.7 74 538.9 74 540.9 V543.7 C74 545.3 71.8 545.5 71.6 546.9 L71.4 550.8 H65.2 L65 546.9 C64.8 545.5 62.6 545.3 62.6 543.7 V540.9 C62.6 538.9 63.7 537.7 66.6 537.2 Z" stroke="#f2f2f2" stroke-width="1.25" fill="none" stroke-linejoin="round"/>
<path d="M66.6 563.4 A3 3.1 0 1 1 70 563.4 C72.9 563.9 74 565.1 74 567.1 V569.9 C74 571.5 71.8 571.7 71.6 573.1 L71.4 577 H65.2 L65 573.1 C64.8 571.7 62.6 571.5 62.6 569.9 V567.1 C62.6 565.1 63.7 563.9 66.6 563.4 Z" stroke="#f2f2f2" stroke-width="1.25" fill="none" stroke-linejoin="round"/>
<path d="M66.6 589.6 A3 3.1 0 1 1 70 589.6 C72.9 590.1 74 591.3 74 593.3 V596.1 C74 597.7 71.8 597.9 71.6 599.3 L71.4 603.2 H65.2 L65 599.3 C64.8 597.9 62.6 597.7 62.6 596.1 V593.3 C62.6 591.3 63.7 590.1 66.6 589.6 Z" stroke="#f2f2f2" stroke-width="1.25" fill="none" stroke-linejoin="round"/>
<path d="M66.6 615.8 A3 3.1 0 1 1 70 615.8 C72.9 616.3 74 617.5 74 619.5 V622.3 C74 623.9 71.8 624.1 71.6 625.5 L71.4 629.4 H65.2 L65 625.5 C64.8 624.1 62.6 623.9 62.6 622.3 V619.5 C62.6 617.5 63.7 616.3 66.6 615.8 Z" stroke="#f2f2f2" stroke-width="1.25" fill="none" stroke-linejoin="round"/>
<path d="M66.6 642 A3 3.1 0 1 1 70 642 C72.9 642.5 74 643.7 74 645.7 V648.5 C74 650.1 71.8 650.3 71.6 651.7 L71.4 655.6 H65.2 L65 651.7 C64.8 650.3 62.6 650.1 62.6 648.5 V645.7 C62.6 643.7 63.7 642.5 66.6 642 Z" stroke="#f2f2f2" stroke-width="1.25" fill="none" stroke-linejoin="round"/>
<rect x="58.1" y="663.3" width="15" height="9" rx="0" stroke="#f2f2f2" stroke-width="1.3" fill="none" />
<path d="M73.1 672.3 L76.8 675.5 L73 679.2" stroke="#f2f2f2" stroke-width="1.3" fill="none" stroke-linejoin="miter"/>
<path d="M57.8 681.6 q2.5 -4.8 5 0 q2.5 -4.8 5 0 q2.5 -4.8 5 0 q2.5 -4.8 5 0 " stroke="#f2f2f2" stroke-width="1.3" fill="none" />
<rect x="58.1" y="689.5" width="15" height="9" rx="0" stroke="#f2f2f2" stroke-width="1.3" fill="none" />
<path d="M73.1 698.5 L76.8 701.7 L73 705.4" stroke="#f2f2f2" stroke-width="1.3" fill="none" stroke-linejoin="miter"/>
<path d="M57.8 707.8 q2.5 -4.8 5 0 q2.5 -4.8 5 0 q2.5 -4.8 5 0 q2.5 -4.8 5 0 " stroke="#f2f2f2" stroke-width="1.3" fill="none" />
</g>
<path d="M372.25 437.1 L375.5 433.7 L378.75 437.1" stroke="#555" stroke-width="1.4" fill="none" stroke-linecap="round" stroke-linejoin="round"/>
<path d="M372.25 682.1 L375.5 685.5 L378.75 682.1" stroke="#555" stroke-width="1.4" fill="none" stroke-linecap="round" stroke-linejoin="round"/>
<path d="M14.6 703.6 H27.2" stroke="#f2f2f2" stroke-width="1.8" fill="none" />
<path d="M9.4 703.6 H11.4" stroke="#f2f2f2" stroke-width="1.8" fill="none" />
<path d="M14.6 709.8 H27.2" stroke="#f2f2f2" stroke-width="1.8" fill="none" />
<path d="M9.4 709.8 H11.4" stroke="#f2f2f2" stroke-width="1.8" fill="none" />
<path d="M14.6 716 H27.2" stroke="#f2f2f2" stroke-width="1.8" fill="none" />
<path d="M9.4 716 H11.4" stroke="#f2f2f2" stroke-width="1.8" fill="none" />
<path d="M356.2 704 H369.6 L364.4 710.6 V717.6 L361.4 715.4 V710.6 Z" stroke="#f2f2f2" stroke-width="1.3" fill="none" stroke-linejoin="round"/>
<path d="M614 74.2 L626 85.6 M626 74.2 L614 85.6" stroke="#f2f2f2" stroke-width="1.3" fill="none" />
<path d="M1324.9 77.3 L1329.4 81.9 L1333.9 77.3" stroke="#f2f2f2" stroke-width="1.5" fill="none" stroke-linecap="round" stroke-linejoin="round"/>
<path d="M1335.4 111.6 L1339.6 106.8 L1343.8 111.6" stroke="#4a4a4a" stroke-width="2.0" fill="none" stroke-linecap="round" stroke-linejoin="round"/>
<path d="M1335.4 678.6 L1339.6 683.4 L1343.8 678.6" stroke="#4a4a4a" stroke-width="2.0" fill="none" stroke-linecap="round" stroke-linejoin="round"/>
<rect x="1352" y="65.4" width="1.2" height="1.2" rx="0" stroke="none" stroke-width="0" fill="#8a8a8a" />
<rect x="1354" y="65.4" width="1.2" height="1.2" rx="0" stroke="none" stroke-width="0" fill="#8a8a8a" />
<rect x="1356" y="65.4" width="1.2" height="1.2" rx="0" stroke="none" stroke-width="0" fill="#8a8a8a" />
<rect x="1358" y="65.4" width="1.2" height="1.2" rx="0" stroke="none" stroke-width="0" fill="#8a8a8a" />
<rect x="1360" y="65.4" width="1.2" height="1.2" rx="0" stroke="none" stroke-width="0" fill="#8a8a8a" />
<rect x="1362" y="65.4" width="1.2" height="1.2" rx="0" stroke="none" stroke-width="0" fill="#8a8a8a" />
<rect x="1364" y="65.4" width="1.2" height="1.2" rx="0" stroke="none" stroke-width="0" fill="#8a8a8a" />
<rect x="1366" y="65.4" width="1.2" height="1.2" rx="0" stroke="none" stroke-width="0" fill="#8a8a8a" />
<rect x="1368" y="65.4" width="1.2" height="1.2" rx="0" stroke="none" stroke-width="0" fill="#8a8a8a" />
<rect x="1370" y="65.4" width="1.2" height="1.2" rx="0" stroke="none" stroke-width="0" fill="#8a8a8a" />
<rect x="1372" y="65.4" width="1.2" height="1.2" rx="0" stroke="none" stroke-width="0" fill="#8a8a8a" />
<rect x="1374" y="65.4" width="1.2" height="1.2" rx="0" stroke="none" stroke-width="0" fill="#8a8a8a" />
<rect x="1376" y="65.4" width="1.2" height="1.2" rx="0" stroke="none" stroke-width="0" fill="#8a8a8a" />
<rect x="1378" y="65.4" width="1.2" height="1.2" rx="0" stroke="none" stroke-width="0" fill="#8a8a8a" />
<rect x="1380" y="65.4" width="1.2" height="1.2" rx="0" stroke="none" stroke-width="0" fill="#8a8a8a" />
<rect x="1382" y="65.4" width="1.2" height="1.2" rx="0" stroke="none" stroke-width="0" fill="#8a8a8a" />
<rect x="1384" y="65.4" width="1.2" height="1.2" rx="0" stroke="none" stroke-width="0" fill="#8a8a8a" />
<rect x="1386" y="65.4" width="1.2" height="1.2" rx="0" stroke="none" stroke-width="0" fill="#8a8a8a" />
<rect x="1388" y="65.4" width="1.2" height="1.2" rx="0" stroke="none" stroke-width="0" fill="#8a8a8a" />
<rect x="1361.6" y="79.2" width="18.8" height="18.4" rx="0" stroke="#f2f2f2" stroke-width="1.4" fill="none" />
<text x="1366.6" y="93.4" font-size="12.5" fill="#f2f2f2">A</text>
<path d="M1367.9 122.8 L1380.2 131.2 L1372.4 134.4 L1368.4 128.2 Z" stroke="#c9a832" stroke-width="1.2" fill="#6b5a1c" stroke-linejoin="round"/>
<path d="M1361.5 135.2 L1368.3 128 L1372.4 134.5 Z" stroke="#f2f2f2" stroke-width="1.3" fill="none" stroke-linejoin="round"/>
<path d="M1367.9 122.8 L1380.2 131.2" stroke="#c9a832" stroke-width="1.7" fill="none" />
<path d="M1368.6 123 L1373.8 116.8" stroke="#c9a832" stroke-width="1.4" fill="none" />
<path d="M1362.6 172.6 L1373.8 153.8 M1362.6 172.6 L1380.2 162.8 M1367.2 165.4 L1372.4 167.4" stroke="#1f74b8" stroke-width="2.0" fill="none" stroke-linecap="round"/>
<path d="M1366.4 166 L1372.6 160.4 L1373.4 166.6 Z" stroke="none" stroke-width="0" fill="#174f7c" />
<circle cx="1362.3" cy="173.1" r="1.4" stroke="none" stroke-width="0" fill="#f2f2f2"/>
<rect x="1361.3" y="192.7" width="15" height="9" rx="0" stroke="#f2f2f2" stroke-width="1.3" fill="none" />
<path d="M1376.3 201.7 L1380 204.9 L1376.2 208.6" stroke="#f2f2f2" stroke-width="1.3" fill="none" stroke-linejoin="miter"/>
<path d="M1361 211 q2.5 -4.8 5 0 q2.5 -4.8 5 0 q2.5 -4.8 5 0 q2.5 -4.8 5 0 " stroke="#f2f2f2" stroke-width="1.3" fill="none" />
<path d="M1379.2 240.6 A3.7 3.7 0 0 1 1376.7 246.7 A3.7 3.7 0 0 1 1370.6 249.2 A3.7 3.7 0 0 1 1364.5 246.7 A3.7 3.7 0 0 1 1362.0 240.6 A3.7 3.7 0 0 1 1364.5 234.5 A3.7 3.7 0 0 1 1370.6 232.0 A3.7 3.7 0 0 1 1376.7 234.5 A3.7 3.7 0 0 1 1379.2 240.6 " stroke="#f2f2f2" stroke-width="1.3" fill="none" />
<rect x="1361.3" y="268.1" width="14.4" height="8.2" rx="0" stroke="#f2f2f2" stroke-width="1.3" fill="none" />
<path d="M1375.7 276.3 L1379.6 279.4 L1373.6 285.2" stroke="#f2f2f2" stroke-width="1.3" fill="none" />
<path d="M1371.2 287.4 L1376.8 286.2 L1372.6 282 Z" stroke="#f2f2f2" stroke-width="0.6" fill="#f2f2f2" />
<path d="M1364.6 316.6 C1366.4 313 1363.8 311.2 1363.8 308.6 A3.5 3.5 0 0 1 1370.8 308.6 C1370.8 311.2 1368.2 313 1370 316.6" stroke="#f2f2f2" stroke-width="1.3" fill="none" />
<rect x="1357.6" y="316.6" width="19.4" height="4.6" rx="1" stroke="#f2f2f2" stroke-width="1.3" fill="none" />
<path d="M1357.6 324.8 H1377" stroke="#f2f2f2" stroke-width="1.4" fill="none" />
<path d="M1381.6 313.7 L1385 317.5 L1388.4 313.7" stroke="#f2f2f2" stroke-width="1.5" fill="none" stroke-linecap="round" stroke-linejoin="round"/>
<rect x="1361.4" y="343.4" width="19.2" height="18" rx="0" stroke="#f2f2f2" stroke-width="1.3" fill="none" />
<path d="M1362.4 358.6 L1367.6 352.4 L1371 356 L1374.4 352.8 L1379.6 358.6" stroke="#f2f2f2" stroke-width="1.2" fill="none" stroke-linejoin="round"/>
<circle cx="1375.4" cy="348.4" r="1.3" stroke="#f2f2f2" stroke-width="1" fill="none"/>
<path d="M1364.6 383.4 H1381 V400.8 H1364.6 Z" stroke="#f2f2f2" stroke-width="1.3" fill="none" stroke-dasharray="2.2 2"/>
<path d="M1360.2 383.4 H1368.6 M1364.6 379.4 V387.6" stroke="#f2f2f2" stroke-width="1.3" fill="none" />
<rect x="1352" y="412" width="1.2" height="1.2" rx="0" stroke="none" stroke-width="0" fill="#8a8a8a" />
<rect x="1354" y="412" width="1.2" height="1.2" rx="0" stroke="none" stroke-width="0" fill="#8a8a8a" />
<rect x="1356" y="412" width="1.2" height="1.2" rx="0" stroke="none" stroke-width="0" fill="#8a8a8a" />
<rect x="1358" y="412" width="1.2" height="1.2" rx="0" stroke="none" stroke-width="0" fill="#8a8a8a" />
<rect x="1360" y="412" width="1.2" height="1.2" rx="0" stroke="none" stroke-width="0" fill="#8a8a8a" />
<rect x="1362" y="412" width="1.2" height="1.2" rx="0" stroke="none" stroke-width="0" fill="#8a8a8a" />
<rect x="1364" y="412" width="1.2" height="1.2" rx="0" stroke="none" stroke-width="0" fill="#8a8a8a" />
<rect x="1366" y="412" width="1.2" height="1.2" rx="0" stroke="none" stroke-width="0" fill="#8a8a8a" />
<rect x="1368" y="412" width="1.2" height="1.2" rx="0" stroke="none" stroke-width="0" fill="#8a8a8a" />
<rect x="1370" y="412" width="1.2" height="1.2" rx="0" stroke="none" stroke-width="0" fill="#8a8a8a" />
<rect x="1372" y="412" width="1.2" height="1.2" rx="0" stroke="none" stroke-width="0" fill="#8a8a8a" />
<rect x="1374" y="412" width="1.2" height="1.2" rx="0" stroke="none" stroke-width="0" fill="#8a8a8a" />
<rect x="1376" y="412" width="1.2" height="1.2" rx="0" stroke="none" stroke-width="0" fill="#8a8a8a" />
<rect x="1378" y="412" width="1.2" height="1.2" rx="0" stroke="none" stroke-width="0" fill="#8a8a8a" />
<rect x="1380" y="412" width="1.2" height="1.2" rx="0" stroke="none" stroke-width="0" fill="#8a8a8a" />
<rect x="1382" y="412" width="1.2" height="1.2" rx="0" stroke="none" stroke-width="0" fill="#8a8a8a" />
<path d="M1357.6 444.8 L1378.6 426.2" stroke="#f2f2f2" stroke-width="1.4" fill="none" />
<path d="M1357.6 483.8 L1373 468.8" stroke="#f2f2f2" stroke-width="1.4" fill="none" />
<path d="M1378.6 464.6 L1370.2 467 L1375.6 472.6 Z" stroke="#f2f2f2" stroke-width="1" fill="#f2f2f2" />
<path d="M1358 521 C1359 509 1367 502 1378.6 501" stroke="#f2f2f2" stroke-width="1.4" fill="none" />
<path d="M1357.6 559.4 L1363.4 547.6 L1368.6 552.6 L1371 542 L1378.6 538.6" stroke="#f2f2f2" stroke-width="1.4" fill="none" stroke-linejoin="miter"/>
<path d="M1358.4 587.2 H1378.4 M1358.4 582.6 V591.8 M1378.4 582.6 V591.8 M1361.6 584.6 L1358.8 587.2 L1361.6 589.8 M1375.2 584.6 L1378 587.2 L1375.2 589.8" stroke="#f2f2f2" stroke-width="1.3" fill="none" />
<rect x="1358" y="618.2" width="20.2" height="14.4" rx="0" stroke="#f2f2f2" stroke-width="1.4" fill="none" />
<ellipse cx="1367.2" cy="663.5" rx="10.1" ry="7.3" stroke="#f2f2f2" stroke-width="1.4" fill="none"/>
<path d="M1363.6 720.8 L1367.6 724.8 L1371.6 720.8" stroke="#f2f2f2" stroke-width="1.5" fill="none" stroke-linecap="round" stroke-linejoin="round"/>
<rect x="394" y="701" width="17.4" height="17" rx="0" stroke="#4c4c4c" stroke-width="1.3" fill="none" />
<path d="M394 704.2 H411.4" stroke="#4c4c4c" stroke-width="1.2" fill="none" />
<rect x="430.8" y="701" width="18.2" height="17" rx="0" stroke="#f2f2f2" stroke-width="1.4" fill="none" />
<path d="M439.9 701 V718 M430.8 703.6 H449" stroke="#f2f2f2" stroke-width="1.3" fill="none" />
<rect x="468.6" y="701" width="18.2" height="17" rx="0" stroke="#f2f2f2" stroke-width="1.4" fill="none" />
<path d="M468.6 709.5 H486.8 M468.6 703.6 H486.8 M468.6 711.8 H486.8" stroke="#f2f2f2" stroke-width="1.3" fill="none" />
<path d="M513.6 700.6 H523.2 L528 705.4 V719 H513.6 Z M523.2 700.6 V705.4 H528" stroke="#f2f2f2" stroke-width="1.3" fill="none" stroke-linejoin="round"/>
<path d="M520.8 706.2 V716.6 M515.8 711.4 H525.8 M519.4 707.8 L520.8 706.2 L522.2 707.8 M519.4 715 L520.8 716.6 L522.2 715 M517.4 710 L515.8 711.4 L517.4 712.8 M524.2 710 L525.8 711.4 L524.2 712.8" stroke="#f2f2f2" stroke-width="1.0" fill="none" />
<path d="M550.2 700.4 V703 H566.2 V700.4" stroke="#f2f2f2" stroke-width="1.3" fill="none" />
<path d="M550.2 713.4 V706.4 H561.4 L566 711 V713.4 M561.4 706.4 V711 H566" stroke="#f2f2f2" stroke-width="1.3" fill="none" stroke-linejoin="round"/>
<path d="M550.2 716.8 H566.2 M552.6 714.8 L550.4 716.8 L552.6 718.8 M563.8 714.8 L566 716.8 L563.8 718.8" stroke="#f2f2f2" stroke-width="1.2" fill="none" />
<path d="M592.4 710.6 L589.4 707.4 C588.4 706.2 590 704.8 591.2 705.8 L593.6 708.2 V702.8 C593.6 701.2 595.8 701.2 595.8 702.8 V707.4 V701.6 C595.8 700 598.2 700 598.2 701.6 V707.4 V702.2 C598.2 700.6 600.6 700.6 600.6 702.2 V707.8 V704.4 C600.6 702.8 602.8 702.8 602.8 704.4 V711.6 C602.8 715.6 601.4 718.4 598.4 718.4 H596.4 C594.6 718.4 593.8 717.4 592.6 715.4 Z" stroke="#e6f3ff" stroke-width="1.2" fill="none" stroke-linejoin="round"/>
<path d="M630.2 702 V716.8 L633.8 713.6 L636.4 718.6 L638.4 717.6 L636 712.8 L640.8 712.4 Z" stroke="#f2f2f2" stroke-width="1.3" fill="none" stroke-linejoin="round"/>
<path d="M667.2 700.4 V719 M664.4 700.4 H670 M664.4 719 H670" stroke="#f2f2f2" stroke-width="1.3" fill="none" />
<text x="671.4" y="714.4" font-size="10.5" fill="#f2f2f2">A</text>
<circle cx="708" cy="707.2" r="6.6" stroke="#f2f2f2" stroke-width="1.4" fill="none"/>
<path d="M712.8 712 L720.4 719.4" stroke="#f2f2f2" stroke-width="1.6" fill="none" />
<path d="M705.4 705.6 H710.6 M708 703.2 V708 M705.4 710 H710.6" stroke="#f2f2f2" stroke-width="1.1" fill="none" />
<path d="M743.6 704.6 V715.2" stroke="#4c4c4c" stroke-width="1.3" fill="none" />
<path d="M752.6 704.8 L746 709.9 L752.6 715 Z" stroke="#4c4c4c" stroke-width="1.2" fill="none" />
<path d="M789.6 704.8 L783.2 709.9 L789.6 715 Z" stroke="#4c4c4c" stroke-width="1.2" fill="none" />
<path d="M1044.8 708.1 L1048.8 712.3 L1052.8 708.1" stroke="#f2f2f2" stroke-width="1.6" fill="none" stroke-linecap="round" stroke-linejoin="round"/>
<path d="M811.6 739.2 V756.4 M819.8 739.2 V756.4 M806.6 744 H825.2 M806.6 751.4 H825.2" stroke="#f2f2f2" stroke-width="1.3" fill="none" />
<path d="M849.4 739.2 V755.6 M857.4 739.2 V746 M844.4 744 H863.6 M844.4 751.4 H853" stroke="#f2f2f2" stroke-width="1.3" fill="none" />
<path d="M855 747 h5.6 a5.2 5.2 0 0 1 0 10.4 h-5.6 v-2.9 h5.4 a2.3 2.3 0 0 0 0 -4.6 h-5.4 Z" stroke="#f2f2f2" stroke-width="1.2" fill="none" stroke-linejoin="round"/>
<path d="M892 755.6 H885 V739.4 H895.4 L900.6 744.6 V746.4 M895.4 739.4 V744.6 H900.6" stroke="#f2f2f2" stroke-width="1.3" fill="none" stroke-linejoin="round"/>
<path d="M892.8 747 h5.6 a5.2 5.2 0 0 1 0 10.4 h-5.6 v-2.9 h5.4 a2.3 2.3 0 0 0 0 -4.6 h-5.4 Z" stroke="#f2f2f2" stroke-width="1.2" fill="none" stroke-linejoin="round"/>
<path d="M921.4 755.4 L923.6 749.8 L934.6 740 L938.4 743.8 L935.6 746.6 M921.4 755.4 L925.6 754.4 M923.6 749.8 L926.6 753" stroke="#f2f2f2" stroke-width="1.3" fill="none" stroke-linejoin="round"/>
<path d="M930.4 747 h5.6 a5.2 5.2 0 0 1 0 10.4 h-5.6 v-2.9 h5.4 a2.3 2.3 0 0 0 0 -4.6 h-5.4 Z" stroke="#f2f2f2" stroke-width="1.2" fill="none" stroke-linejoin="round"/>
<path d="M959.4 755.4 L961.6 749.8 L972.6 740 L976.4 743.8 L972 748.2 M959.4 755.4 L963.6 754.4 M961.6 749.8 L964.6 753" stroke="#f2f2f2" stroke-width="1.3" fill="none" stroke-linejoin="round"/>
<path d="M975.6 749.4 A4 4 0 1 0 978.4 753.2 M973.4 748.6 L975.8 749.4 L975 751.8" stroke="#2f86d0" stroke-width="1.5" fill="none" />
<rect x="995.8" y="739" width="19.2" height="18.2" rx="0" stroke="#f2f2f2" stroke-width="1.4" fill="none" />
<path d="M995.8 742.4 H1015" stroke="#f2f2f2" stroke-width="1.2" fill="none" />
<path d="M1000 747.2 H1011 M1008.6 745 L1011 747.2 L1008.6 749.4 M1011 752.4 H1000 M1002.4 750.2 L1000 752.4 L1002.4 754.6" stroke="#f2f2f2" stroke-width="1.2" fill="none" />
<path d="M1028 746.6 L1032 750.6 L1036 746.6" stroke="#f2f2f2" stroke-width="1.5" fill="none" stroke-linecap="round" stroke-linejoin="round"/>
</svg>
</div>
</body></html>
